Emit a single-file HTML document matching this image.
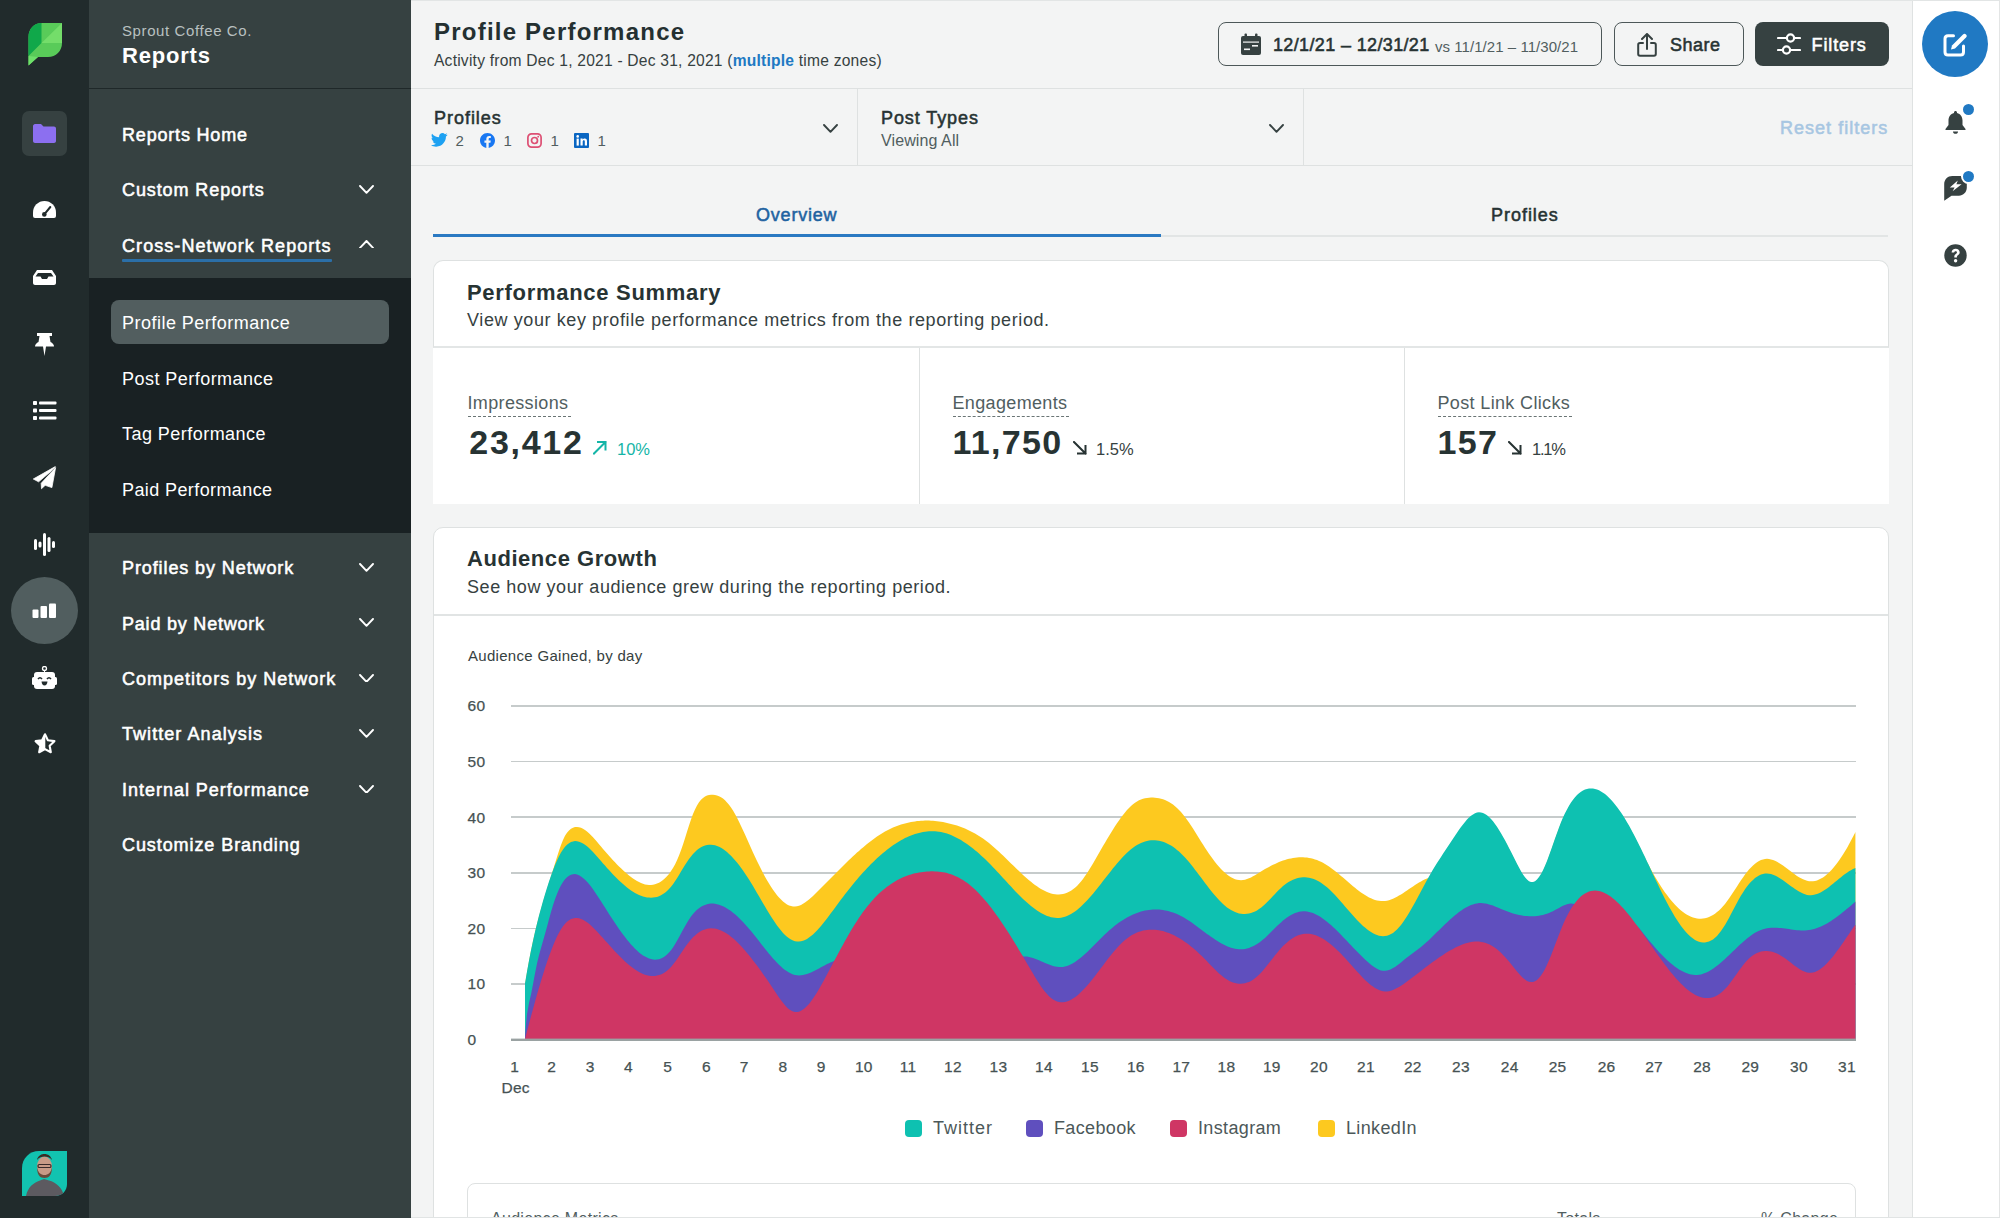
<!DOCTYPE html>
<html><head><meta charset="utf-8"><title>Profile Performance</title>
<style>
html,body{margin:0;padding:0;width:2000px;height:1218px;overflow:hidden;background:#f3f4f4;font-family:"Liberation Sans", sans-serif;}
.t{position:absolute;white-space:nowrap;line-height:1;font-family:"Liberation Sans", sans-serif;}
b{font-weight:700}
.ax{color:#465253;-webkit-text-stroke:0.25px #465253;letter-spacing:0.3px}
</style></head><body>
<div style="position:relative;width:2000px;height:1218px;overflow:hidden">
<div style="position:absolute;left:0px;top:0px;width:89px;height:1218px;background:#212b2c"></div>
<div style="position:absolute;left:89px;top:0px;width:322px;height:1218px;background:#364141"></div>
<div style="position:absolute;left:89px;top:88px;width:322px;height:1px;background:#1f2829"></div>
<div style="position:absolute;left:89px;top:278px;width:322px;height:255px;background:#192123"></div>
<div style="position:absolute;left:411px;top:0px;width:1501px;height:1218px;background:#f3f4f4"></div>
<div style="position:absolute;left:1912px;top:0px;width:88px;height:1218px;background:#fff;border-left:1px solid #dfe2e2;box-sizing:border-box"></div>
<div style="position:absolute;left:411px;top:0px;width:1589px;height:1px;background:#e2e5e5"></div>
<svg style="position:absolute;left:28px;top:23px" width="35" height="43" viewBox="0 0 35 43">
<path d="M14,0 H34 V20 C34,28 28,34 20,34 H10 L0.5,42.5 V14 C0.5,6 6,0 14,0 Z" fill="#59cb59"/>
<path d="M14,0 H13.5 V20 L0.5,33 V14 C0.5,6 6,0 13.5,0 Z" fill="#10a84a"/>
<path d="M34,0 V20 L13.5,20 Z" fill="#74dd6a"/>
<path d="M0.5,33 L10,34 L0.5,42.5 Z" fill="#6ee06a"/>
</svg>
<div style="position:absolute;left:22px;top:111px;width:45px;height:45px;background:#364141;border-radius:7px"></div>
<svg style="position:absolute;left:33px;top:124px" width="23" height="19" viewBox="0 0 23 19">
<path d="M0,2 C0,1 1,0 2,0 H8 L10.5,2.6 H21 C22,2.6 23,3.5 23,4.6 V17 C23,18 22,19 21,19 H2 C1,19 0,18 0,17 Z" fill="#8c6ff0"/></svg>
<svg style="position:absolute;left:33px;top:201px" width="23" height="17" viewBox="0 0 23 17">
<path d="M0,15 V11.5 A11.5,11.5 0 0 1 23,11.5 V15 Q23,17 21,17 H2 Q0,17 0,15 Z" fill="#fff"/>
<path d="M11.5,13.2 L17.3,6" stroke="#212b2c" stroke-width="2" stroke-linecap="round"/><circle cx="11.3" cy="13.4" r="2.3" fill="#212b2c"/></svg>
<svg style="position:absolute;left:33px;top:270px" width="23" height="15" viewBox="0 0 23 15">
<path d="M4,0 H19 L23,6 V13 C23,14 22,15 21,15 H2 C1,15 0,14 0,13 V6 Z" fill="#fff"/>
<path d="M5,3 H18 L20.5,6.5 H15.5 L14,9 H9 L7.5,6.5 H2.5 Z" fill="#212b2c"/></svg>
<svg style="position:absolute;left:35px;top:333px" width="19" height="23" viewBox="0 0 19 23">
<path d="M2,0 H17 V3 H14.5 L15.5,9 C17.5,10 19,11.5 19,13.5 H11 L9.5,23 L8,13.5 H0 C0,11.5 1.5,10 3.5,9 L4.5,3 H2 Z" fill="#fff"/></svg>
<svg style="position:absolute;left:33px;top:401px" width="24" height="19" viewBox="0 0 24 19">
<g fill="#fff"><rect x="0" y="0" width="4" height="4" rx="0.8"/><rect x="0" y="7.5" width="4" height="4" rx="0.8"/><rect x="0" y="15" width="4" height="4" rx="0.8"/>
<rect x="6" y="0.5" width="17.5" height="3" rx="1"/><rect x="6" y="8" width="17.5" height="3" rx="1"/><rect x="6" y="15.5" width="17.5" height="3" rx="1"/></g></svg>
<svg style="position:absolute;left:33px;top:466px" width="24" height="24" viewBox="0 0 24 24">
<path d="M22.3,0.6 L0.3,13 L5.6,15.8 L18,5.2 Z" fill="#fff" stroke="#fff" stroke-width="0.8" stroke-linejoin="round"/>
<path d="M22.6,1.5 L18.9,21.6 L12.2,19.3 L8.5,22.7 L8.2,17.3 L19.5,5 Z" fill="#fff" stroke="#fff" stroke-width="0.8" stroke-linejoin="round"/></svg>
<svg style="position:absolute;left:34px;top:533px" width="21" height="23" viewBox="0 0 21 23">
<g fill="#fff"><rect x="0" y="6" width="3" height="11" rx="1.5"/><rect x="4.5" y="8.5" width="3" height="6" rx="1.5"/><rect x="9" y="0" width="3" height="23" rx="1.5"/>
<rect x="13.5" y="4" width="3" height="15" rx="1.5"/><rect x="18" y="8" width="3" height="7" rx="1.5"/></g></svg>
<div style="position:absolute;left:11px;top:577px;width:67px;height:67px;background:#515e5f;border-radius:50%"></div>
<svg style="position:absolute;left:32px;top:603px" width="25" height="16" viewBox="0 0 25 16">
<g fill="#fff"><rect x="0.5" y="6.5" width="6" height="8.5" rx="1"/><rect x="8.5" y="3" width="6.5" height="12" rx="1"/><rect x="17" y="0.5" width="7" height="14.5" rx="1"/></g></svg>
<svg style="position:absolute;left:32px;top:666px" width="25" height="24" viewBox="0 0 25 24">
<circle cx="12.5" cy="2.5" r="2" fill="none" stroke="#fff" stroke-width="1.3"/><rect x="12" y="4" width="1" height="3" fill="#fff"/>
<rect x="2" y="6" width="21" height="17" rx="3" fill="#fff"/><rect x="0" y="11" width="25" height="8" rx="1.5" fill="#fff"/>
<path d="M6,13 Q8,10.5 10,13" stroke="#212b2c" stroke-width="1.6" fill="none"/><path d="M15,13 Q17,10.5 19,13" stroke="#212b2c" stroke-width="1.6" fill="none"/>
<path d="M9.5,15.5 H15.5 Q15,19.5 12.5,19.5 Q10,19.5 9.5,15.5 Z" fill="#212b2c"/></svg>
<svg style="position:absolute;left:32.5px;top:732px" width="24" height="24" viewBox="0 0 24 24">
<polygon points="12.00,2.30 14.88,8.24 21.42,9.14 16.66,13.71 17.82,20.21 12.00,17.10 6.18,20.21 7.34,13.71 2.58,9.14 9.12,8.24" fill="none" stroke="#fff" stroke-width="2.1" stroke-linejoin="round"/>
<polygon points="12.00,2.30 9.12,8.24 2.58,9.14 7.34,13.71 6.18,20.21 12.00,17.10" fill="#fff" stroke="#fff" stroke-width="0.6" stroke-linejoin="round"/></svg>
<svg style="position:absolute;left:22px;top:1151px" width="45" height="45" viewBox="0 0 45 45">
<defs><clipPath id="av"><path d="M17,0 H45 V33 C45,40 40,45 33,45 H0 V17 C0,7.5 7.5,0 17,0 Z"/></clipPath></defs>
<g clip-path="url(#av)"><rect width="45" height="45" fill="#12c3b0"/>
<path d="M4,45 C6,36 11,32 18,29.5 L22,28 L27,29.5 C34,31.5 40,36 42,45 Z" fill="#5c5a60"/>
<ellipse cx="22.5" cy="15.5" rx="7.5" ry="10" fill="#c99a86"/><path d="M15,16 C15,24 18,27 22.5,27 C27,27 30,24 30,16 C29,22 26,24 22.5,24 C19,24 16,22 15,16Z" fill="#6b4a3a"/>
<path d="M15,9 C16,4 20,3 22.5,3 C26,3 29,5 30,9 C28,6 25,5.5 22.5,5.5 C20,5.5 17,6 15,9Z" fill="#3a2a22"/>
<rect x="16" y="13.5" width="13" height="3" rx="1.3" fill="none" stroke="#3a2a2a" stroke-width="1.2"/></g></svg>
<div class="t" style="left:122.0px;top:23.2px;font-size:15px;color:#b9c0c0;font-weight:400;letter-spacing:0.6px;">Sprout Coffee Co.</div>
<div class="t" style="left:122.0px;top:45.3px;font-size:22px;color:#ffffff;font-weight:700;letter-spacing:0.8px;">Reports</div>
<div class="t" style="left:122.0px;top:125.7px;font-size:18px;color:#fff;font-weight:400;letter-spacing:0.81px;-webkit-text-stroke:0.54px #fff;">Reports Home</div>
<div class="t" style="left:122.0px;top:181.2px;font-size:18px;color:#fff;font-weight:400;letter-spacing:0.9px;-webkit-text-stroke:0.54px #fff;">Custom Reports</div>
<svg style="position:absolute;left:359px;top:185px" width="15" height="8.8" viewBox="0 0 15 8.8"><path d="M1,1 L7.5,7.8 L14,1" fill="none" stroke="#fff" stroke-width="1.9" stroke-linecap="round" stroke-linejoin="round"/></svg>
<div class="t" style="left:122.0px;top:236.7px;font-size:18px;color:#fff;font-weight:400;letter-spacing:1.07px;-webkit-text-stroke:0.54px #fff;">Cross-Network Reports</div>
<svg style="position:absolute;left:359px;top:239.5px" width="15" height="8.8" viewBox="0 0 15 8.8"><path d="M1,7.8 L7.5,1 L14,7.8" fill="none" stroke="#fff" stroke-width="1.9" stroke-linecap="round" stroke-linejoin="round"/></svg>
<div style="position:absolute;left:122px;top:258.5px;width:210px;height:3.3px;background:#2b6fa8;border-radius:1px"></div>
<div style="position:absolute;left:111px;top:300px;width:278px;height:44px;background:#525e5f;border-radius:8px"></div>
<div class="t" style="left:122.0px;top:314.2px;font-size:18px;color:#fff;font-weight:400;letter-spacing:0.48px;">Profile Performance</div>
<div class="t" style="left:122.0px;top:369.7px;font-size:18px;color:#fff;font-weight:400;letter-spacing:0.46px;">Post Performance</div>
<div class="t" style="left:122.0px;top:425.2px;font-size:18px;color:#fff;font-weight:400;letter-spacing:0.46px;">Tag Performance</div>
<div class="t" style="left:122.0px;top:480.7px;font-size:18px;color:#fff;font-weight:400;letter-spacing:0.4px;">Paid Performance</div>
<div class="t" style="left:122.0px;top:559.0px;font-size:18px;color:#fff;font-weight:400;letter-spacing:0.9px;-webkit-text-stroke:0.54px #fff;">Profiles by Network</div>
<svg style="position:absolute;left:359px;top:562.8px" width="15" height="8.8" viewBox="0 0 15 8.8"><path d="M1,1 L7.5,7.8 L14,1" fill="none" stroke="#fff" stroke-width="1.9" stroke-linecap="round" stroke-linejoin="round"/></svg>
<div class="t" style="left:122.0px;top:614.5px;font-size:18px;color:#fff;font-weight:400;letter-spacing:0.79px;-webkit-text-stroke:0.54px #fff;">Paid by Network</div>
<svg style="position:absolute;left:359px;top:618.25px" width="15" height="8.8" viewBox="0 0 15 8.8"><path d="M1,1 L7.5,7.8 L14,1" fill="none" stroke="#fff" stroke-width="1.9" stroke-linecap="round" stroke-linejoin="round"/></svg>
<div class="t" style="left:122.0px;top:669.9px;font-size:18px;color:#fff;font-weight:400;letter-spacing:1.01px;-webkit-text-stroke:0.54px #fff;">Competitors by Network</div>
<svg style="position:absolute;left:359px;top:673.6999999999999px" width="15" height="8.8" viewBox="0 0 15 8.8"><path d="M1,1 L7.5,7.8 L14,1" fill="none" stroke="#fff" stroke-width="1.9" stroke-linecap="round" stroke-linejoin="round"/></svg>
<div class="t" style="left:122.0px;top:725.4px;font-size:18px;color:#fff;font-weight:400;letter-spacing:1.06px;-webkit-text-stroke:0.54px #fff;">Twitter Analysis</div>
<svg style="position:absolute;left:359px;top:729.15px" width="15" height="8.8" viewBox="0 0 15 8.8"><path d="M1,1 L7.5,7.8 L14,1" fill="none" stroke="#fff" stroke-width="1.9" stroke-linecap="round" stroke-linejoin="round"/></svg>
<div class="t" style="left:122.0px;top:780.8px;font-size:18px;color:#fff;font-weight:400;letter-spacing:0.98px;-webkit-text-stroke:0.54px #fff;">Internal Performance</div>
<svg style="position:absolute;left:359px;top:784.5999999999999px" width="15" height="8.8" viewBox="0 0 15 8.8"><path d="M1,1 L7.5,7.8 L14,1" fill="none" stroke="#fff" stroke-width="1.9" stroke-linecap="round" stroke-linejoin="round"/></svg>
<div class="t" style="left:122.0px;top:836.2px;font-size:18px;color:#fff;font-weight:400;letter-spacing:0.92px;-webkit-text-stroke:0.54px #fff;">Customize Branding</div>
<div class="t" style="left:434.0px;top:19.9px;font-size:24px;color:#243031;font-weight:700;letter-spacing:1.22px;">Profile Performance</div>
<div class="t" style="left:434.0px;top:52.7px;font-size:15.6px;color:#364141;font-weight:400;letter-spacing:0.22px;">Activity from Dec 1, 2021 - Dec 31, 2021 (<b style="color:#2079c3">multiple</b> time zones)</div>
<div style="position:absolute;left:1218px;top:22px;width:384px;height:44px;border:1.8px solid #4d5859;border-radius:8px;box-sizing:border-box"></div>
<svg style="position:absolute;left:1241px;top:33px" width="20" height="22" viewBox="0 0 20 22">
<rect x="0" y="3" width="20" height="19" rx="2" fill="#364141"/><rect x="3.5" y="0.5" width="2.5" height="5" rx="1" fill="#364141"/><rect x="14" y="0.5" width="2.5" height="5" rx="1" fill="#364141"/>
<rect x="2" y="8.5" width="16" height="1.2" fill="#f3f4f4"/><rect x="11" y="12" width="6" height="1.6" fill="#f3f4f4"/><rect x="3" y="15.5" width="6" height="1.6" fill="#f3f4f4"/></svg>
<div class="t" style="left:1273.0px;top:36.0px;font-size:18px;color:#273333;font-weight:400;letter-spacing:0.36px;-webkit-text-stroke:0.54px #273333;">12/1/21 – 12/31/21</div>
<div class="t" style="left:1435.0px;top:38.5px;font-size:15px;color:#515e5f;font-weight:400;letter-spacing:0.05px;">vs 11/1/21 – 11/30/21</div>
<div style="position:absolute;left:1614px;top:22px;width:130px;height:44px;border:1.8px solid #4d5859;border-radius:8px;box-sizing:border-box"></div>
<svg style="position:absolute;left:1637px;top:33px" width="21" height="24" viewBox="0 0 21 24">
<path d="M6,10 H3 C2,10 1.2,10.8 1.2,11.8 V21 C1.2,22 2,22.8 3,22.8 H17 C18,22.8 18.8,22 18.8,21 V11.8 C18.8,10.8 18,10 17,10 H14" fill="none" stroke="#364141" stroke-width="2" stroke-linecap="round"/>
<path d="M10,16 V1.5 M5,6 L10,1 L15,6" fill="none" stroke="#364141" stroke-width="2" stroke-linecap="round" stroke-linejoin="round"/></svg>
<div class="t" style="left:1670.0px;top:35.7px;font-size:18px;color:#273333;font-weight:400;letter-spacing:0.5px;-webkit-text-stroke:0.54px #273333;">Share</div>
<div style="position:absolute;left:1755px;top:22px;width:134px;height:44px;background:#364141;border-radius:8px"></div>
<svg style="position:absolute;left:1777px;top:33px" width="24" height="23" viewBox="0 0 24 23">
<g fill="none" stroke="#fff" stroke-width="2.2" stroke-linecap="round"><path d="M1,5 H9.5 M17.5,5 H23"/><circle cx="13.5" cy="5" r="3.6"/>
<path d="M1,17 H5.5 M13.5,17 H23"/><circle cx="9.5" cy="17" r="3.6"/></g></svg>
<div class="t" style="left:1811.5px;top:35.7px;font-size:18px;color:#ffffff;font-weight:400;letter-spacing:0.88px;-webkit-text-stroke:0.54px #ffffff;">Filters</div>
<div style="position:absolute;left:411px;top:88px;width:1501px;height:1px;background:#dee1e1"></div>
<div class="t" style="left:434.0px;top:108.9px;font-size:18px;color:#273333;font-weight:400;letter-spacing:0.97px;-webkit-text-stroke:0.54px #273333;">Profiles</div>
<svg style="position:absolute;left:431px;top:133px" width="17" height="14" viewBox="0 0 24 20">
<path fill="#1da1f2" d="M23.6,2.4c-0.9,0.4-1.8,0.6-2.8,0.8c1-0.6,1.8-1.6,2.1-2.7c-0.9,0.6-2,1-3.1,1.2C18.9,0.6,17.6,0,16.3,0c-2.7,0-4.9,2.2-4.9,4.9c0,0.4,0,0.8,0.1,1.1C7.4,5.8,3.8,3.9,1.4,0.9C1,1.6,0.7,2.5,0.7,3.4c0,1.7,0.9,3.2,2.2,4.1c-0.8,0-1.6-0.2-2.2-0.6v0.1c0,2.4,1.7,4.4,3.9,4.8c-0.4,0.1-0.9,0.2-1.3,0.2c-0.3,0-0.6,0-0.9-0.1c0.6,2,2.4,3.4,4.6,3.4c-1.7,1.3-3.8,2.1-6.1,2.1c-0.4,0-0.8,0-1.2-0.1c2.2,1.4,4.8,2.2,7.5,2.2c9.1,0,14-7.5,14-14c0-0.2,0-0.4,0-0.6C22.2,4.2,23,3.3,23.6,2.4z"/></svg>
<div class="t" style="left:455.5px;top:133.2px;font-size:15px;color:#515e5f;font-weight:400;letter-spacing:0px;">2</div>
<svg style="position:absolute;left:480px;top:133px" width="15" height="15" viewBox="0 0 24 24">
<path fill="#1877f2" d="M24,12C24,5.4,18.6,0,12,0S0,5.4,0,12c0,6,4.4,11,10.1,11.9v-8.4H7.1V12h3V9.4c0-3,1.8-4.7,4.5-4.7c1.3,0,2.7,0.2,2.7,0.2v3h-1.5c-1.5,0-2,0.9-2,1.9V12h3.4l-0.5,3.5h-2.8v8.4C19.6,23,24,18,24,12z"/></svg>
<div class="t" style="left:503.5px;top:133.2px;font-size:15px;color:#515e5f;font-weight:400;letter-spacing:0px;">1</div>
<svg style="position:absolute;left:527px;top:133px" width="15" height="15" viewBox="0 0 15 15">
<rect x="0.9" y="0.9" width="13.2" height="13.2" rx="3.6" fill="none" stroke="#dd4f73" stroke-width="1.7"/><circle cx="7.5" cy="7.5" r="3" fill="none" stroke="#dd4f73" stroke-width="1.7"/><circle cx="11.2" cy="3.7" r="0.9" fill="#dd4f73"/></svg>
<div class="t" style="left:550.5px;top:133.2px;font-size:15px;color:#515e5f;font-weight:400;letter-spacing:0px;">1</div>
<svg style="position:absolute;left:574px;top:133px" width="15" height="15" viewBox="0 0 15 15">
<rect width="15" height="15" rx="1" fill="#0a66c2"/><rect x="2.6" y="5.6" width="2.2" height="7" fill="#fff"/><circle cx="3.7" cy="3.4" r="1.3" fill="#fff"/>
<path d="M6.5,5.6 H8.6 V6.6 C9,5.9 9.8,5.4 10.8,5.4 C12.5,5.4 13,6.5 13,8.3 V12.6 H10.8 V8.7 C10.8,7.9 10.6,7.3 9.8,7.3 C9,7.3 8.7,7.9 8.7,8.8 V12.6 H6.5 Z" fill="#fff"/></svg>
<div class="t" style="left:597.5px;top:133.2px;font-size:15px;color:#515e5f;font-weight:400;letter-spacing:0px;">1</div>
<svg style="position:absolute;left:823px;top:124px" width="15" height="8.8" viewBox="0 0 15 8.8"><path d="M1,1 L7.5,7.8 L14,1" fill="none" stroke="#364141" stroke-width="1.9" stroke-linecap="round" stroke-linejoin="round"/></svg>
<div style="position:absolute;left:857px;top:89px;width:1px;height:76px;background:#dee1e1"></div>
<div class="t" style="left:881.0px;top:108.9px;font-size:18px;color:#273333;font-weight:400;letter-spacing:0.91px;-webkit-text-stroke:0.54px #273333;">Post Types</div>
<div class="t" style="left:881.0px;top:132.9px;font-size:16px;color:#515e5f;font-weight:400;letter-spacing:0.1px;">Viewing All</div>
<svg style="position:absolute;left:1269px;top:124px" width="15" height="8.8" viewBox="0 0 15 8.8"><path d="M1,1 L7.5,7.8 L14,1" fill="none" stroke="#364141" stroke-width="1.9" stroke-linecap="round" stroke-linejoin="round"/></svg>
<div style="position:absolute;left:1303px;top:89px;width:1px;height:76px;background:#dee1e1"></div>
<div class="t" style="left:1780.0px;top:118.9px;font-size:18px;color:#a7c6e2;font-weight:400;letter-spacing:1.02px;-webkit-text-stroke:0.54px #a7c6e2;">Reset filters</div>
<div style="position:absolute;left:411px;top:165px;width:1501px;height:1px;background:#dee1e1"></div>
<div class="t" style="left:756.0px;top:205.7px;font-size:18px;color:#1f63a1;font-weight:400;letter-spacing:0.79px;-webkit-text-stroke:0.54px #1f63a1;">Overview</div>
<div class="t" style="left:1491.0px;top:205.7px;font-size:18px;color:#273333;font-weight:400;letter-spacing:0.97px;-webkit-text-stroke:0.54px #273333;">Profiles</div>
<div style="position:absolute;left:433px;top:235px;width:1455px;height:2px;background:#e2e5e5"></div>
<div style="position:absolute;left:433px;top:234px;width:728px;height:3.2px;background:#2a79c2"></div>
<div style="position:absolute;left:433px;top:260px;width:1456px;height:88px;background:#fff;border:1px solid #dee1e1;border-bottom:2px solid #e3e6e6;border-radius:10px 10px 0 0;box-sizing:border-box"></div>
<div style="position:absolute;left:433px;top:348px;width:1456px;height:156px;background:#fff"></div>
<div style="position:absolute;left:919px;top:348px;width:1px;height:156px;background:#dee1e1"></div>
<div style="position:absolute;left:1404px;top:348px;width:1px;height:156px;background:#dee1e1"></div>
<div class="t" style="left:467.0px;top:281.8px;font-size:22px;color:#273333;font-weight:700;letter-spacing:0.7px;">Performance Summary</div>
<div class="t" style="left:467.0px;top:311.2px;font-size:18px;color:#364141;font-weight:400;letter-spacing:0.6px;">View your key profile performance metrics from the reporting period.</div>
<div class="t" style="left:467.5px;top:394.0px;font-size:18px;color:#515e5f;font-weight:400;letter-spacing:0.35px;">Impressions</div>
<div style="position:absolute;left:467.5px;top:416px;width:103px;height:0px;border-top:1.5px dashed #6a7575"></div>
<div class="t" style="left:469.3px;top:424.6px;font-size:34px;color:#273333;font-weight:700;letter-spacing:1.7px;">23,412</div>
<div class="t" style="left:952.5px;top:394.0px;font-size:18px;color:#515e5f;font-weight:400;letter-spacing:0.35px;">Engagements</div>
<div style="position:absolute;left:952.5px;top:416px;width:116px;height:0px;border-top:1.5px dashed #6a7575"></div>
<div class="t" style="left:952.5px;top:424.6px;font-size:34px;color:#273333;font-weight:700;letter-spacing:1.3px;">11,750</div>
<div class="t" style="left:1437.5px;top:394.0px;font-size:18px;color:#515e5f;font-weight:400;letter-spacing:0.35px;">Post Link Clicks</div>
<div style="position:absolute;left:1437.5px;top:416px;width:134px;height:0px;border-top:1.5px dashed #6a7575"></div>
<div class="t" style="left:1437.5px;top:424.6px;font-size:34px;color:#273333;font-weight:700;letter-spacing:1.3px;">157</div>
<svg style="position:absolute;left:593px;top:441px" width="14" height="14" viewBox="0 0 14 14"><path d="M1,12.5 L12.5,1 M5,1 H12.5 V8.5" fill="none" stroke="#14b5a7" stroke-width="2" stroke-linecap="square"/></svg>
<div class="t" style="left:617.0px;top:440.5px;font-size:16.5px;color:#14b5a7;font-weight:400;letter-spacing:0px;">10%</div>
<svg style="position:absolute;left:1073px;top:441px" width="14" height="14" viewBox="0 0 14 14"><path d="M1,1 L12.5,12.5 M12.5,5 V12.5 H5" fill="none" stroke="#273333" stroke-width="2" stroke-linecap="square"/></svg>
<div class="t" style="left:1096.0px;top:440.5px;font-size:16.5px;color:#364141;font-weight:400;letter-spacing:0px;">1.5%</div>
<svg style="position:absolute;left:1508px;top:441px" width="14" height="14" viewBox="0 0 14 14"><path d="M1,1 L12.5,12.5 M12.5,5 V12.5 H5" fill="none" stroke="#273333" stroke-width="2" stroke-linecap="square"/></svg>
<div class="t" style="left:1532.0px;top:440.5px;font-size:16.5px;color:#364141;font-weight:400;letter-spacing:-1.2px;">1.1%</div>
<div style="position:absolute;left:433px;top:527px;width:1456px;height:720px;background:#fff;border:1px solid #dee1e1;border-radius:10px 10px 0 0;box-sizing:border-box"></div>
<div style="position:absolute;left:434px;top:614px;width:1454px;height:1.5px;background:#e1e4e4"></div>
<div class="t" style="left:467.0px;top:548.3px;font-size:22px;color:#273333;font-weight:700;letter-spacing:0.55px;">Audience Growth</div>
<div class="t" style="left:467.0px;top:578.2px;font-size:18px;color:#364141;font-weight:400;letter-spacing:0.56px;">See how your audience grew during the reporting period.</div>
<div class="t" style="left:468.0px;top:648.2px;font-size:15px;color:#364141;font-weight:400;letter-spacing:0.3px;">Audience Gained, by day</div>
<div style="position:absolute;left:511px;top:705.25px;width:1345px;height:1.5px;background:#c6cbcb"></div>
<div class="t" style="left:467.5px;top:698.3px;font-size:15.5px;color:#465253;font-weight:400;letter-spacing:0.3px;-webkit-text-stroke:0.25px #465253">60</div>
<div style="position:absolute;left:511px;top:760.85px;width:1345px;height:1.5px;background:#c6cbcb"></div>
<div class="t" style="left:467.5px;top:753.9px;font-size:15.5px;color:#465253;font-weight:400;letter-spacing:0.3px;-webkit-text-stroke:0.25px #465253">50</div>
<div style="position:absolute;left:511px;top:816.45px;width:1345px;height:1.5px;background:#c6cbcb"></div>
<div class="t" style="left:467.5px;top:809.5px;font-size:15.5px;color:#465253;font-weight:400;letter-spacing:0.3px;-webkit-text-stroke:0.25px #465253">40</div>
<div style="position:absolute;left:511px;top:872.05px;width:1345px;height:1.5px;background:#c6cbcb"></div>
<div class="t" style="left:467.5px;top:865.1px;font-size:15.5px;color:#465253;font-weight:400;letter-spacing:0.3px;-webkit-text-stroke:0.25px #465253">30</div>
<div style="position:absolute;left:511px;top:927.65px;width:1345px;height:1.5px;background:#c6cbcb"></div>
<div class="t" style="left:467.5px;top:920.7px;font-size:15.5px;color:#465253;font-weight:400;letter-spacing:0.3px;-webkit-text-stroke:0.25px #465253">20</div>
<div style="position:absolute;left:511px;top:983.25px;width:1345px;height:1.5px;background:#c6cbcb"></div>
<div class="t" style="left:467.5px;top:976.3px;font-size:15.5px;color:#465253;font-weight:400;letter-spacing:0.3px;-webkit-text-stroke:0.25px #465253">10</div>
<div style="position:absolute;left:511px;top:1038.85px;width:1345px;height:1.5px;background:#c6cbcb"></div>
<div class="t" style="left:467.5px;top:1031.9px;font-size:15.5px;color:#465253;font-weight:400;letter-spacing:0.3px;-webkit-text-stroke:0.25px #465253">0</div>
<svg style="position:absolute;left:0;top:0" width="2000" height="1218" viewBox="0 0 2000 1218"><path d="M525.0,984.7 L527.0,972.4 L529.0,961.2 L531.0,950.8 L533.0,941.2 L535.0,932.4 L537.0,924.1 L539.0,916.4 L541.0,909.2 L543.0,902.3 L545.0,895.6 L547.0,889.2 L549.0,882.8 L551.0,876.4 L553.0,870.0 L555.0,863.5 L557.0,857.0 L559.0,850.7 L561.0,844.9 L563.0,839.9 L565.0,835.8 L567.0,832.7 L569.0,830.4 L571.0,828.8 L573.0,827.7 L575.0,827.1 L577.0,826.9 L579.0,827.2 L581.0,827.8 L583.0,828.7 L585.0,830.0 L587.0,831.5 L589.0,833.2 L591.0,835.2 L593.0,837.3 L595.0,839.5 L597.0,841.8 L599.0,844.2 L601.0,846.5 L603.0,848.9 L605.0,851.3 L607.0,853.6 L609.0,855.8 L611.0,858.0 L613.0,860.2 L615.0,862.3 L617.0,864.4 L619.0,866.4 L621.0,868.3 L623.0,870.2 L625.0,872.0 L627.0,873.8 L629.0,875.5 L631.0,877.0 L633.0,878.5 L635.0,879.8 L637.0,881.0 L639.0,882.1 L641.0,883.0 L643.0,883.8 L645.0,884.4 L647.0,884.8 L649.0,885.0 L651.0,885.0 L653.0,884.8 L655.0,884.3 L657.0,883.6 L659.0,882.7 L661.0,881.5 L663.0,880.0 L665.0,878.3 L667.0,876.2 L669.0,873.9 L671.0,871.1 L673.0,868.0 L675.0,864.4 L677.0,860.3 L679.0,855.6 L681.0,850.3 L683.0,844.4 L685.0,838.2 L687.0,831.8 L689.0,825.5 L691.0,819.5 L693.0,814.1 L695.0,809.4 L697.0,805.5 L699.0,802.3 L701.0,799.8 L703.0,797.9 L705.0,796.5 L707.0,795.5 L709.0,794.9 L711.0,794.7 L713.0,794.7 L715.0,795.0 L717.0,795.5 L719.0,796.2 L721.0,797.3 L723.0,798.6 L725.0,800.3 L727.0,802.4 L729.0,804.7 L731.0,807.5 L733.0,810.6 L735.0,814.1 L737.0,817.8 L739.0,821.7 L741.0,825.9 L743.0,830.2 L745.0,834.6 L747.0,839.1 L749.0,843.6 L751.0,848.1 L753.0,852.5 L755.0,856.8 L757.0,861.0 L759.0,865.1 L761.0,869.1 L763.0,873.0 L765.0,876.7 L767.0,880.3 L769.0,883.6 L771.0,886.8 L773.0,889.8 L775.0,892.6 L777.0,895.2 L779.0,897.5 L781.0,899.6 L783.0,901.5 L785.0,903.1 L787.0,904.4 L789.0,905.4 L791.0,906.1 L793.0,906.5 L795.0,906.5 L797.0,906.3 L799.0,905.7 L801.0,904.9 L803.0,903.8 L805.0,902.6 L807.0,901.1 L809.0,899.5 L811.0,897.8 L813.0,895.9 L815.0,894.0 L817.0,892.1 L819.0,890.1 L821.0,888.1 L823.0,886.1 L825.0,884.1 L827.0,882.1 L829.0,880.0 L831.0,878.0 L833.0,876.0 L835.0,874.0 L837.0,872.0 L839.0,870.0 L841.0,868.0 L843.0,866.0 L845.0,864.0 L847.0,862.1 L849.0,860.1 L851.0,858.2 L853.0,856.3 L855.0,854.5 L857.0,852.6 L859.0,850.9 L861.0,849.1 L863.0,847.4 L865.0,845.7 L867.0,844.0 L869.0,842.5 L871.0,840.9 L873.0,839.4 L875.0,838.0 L877.0,836.6 L879.0,835.2 L881.0,834.0 L883.0,832.7 L885.0,831.6 L887.0,830.5 L889.0,829.5 L891.0,828.5 L893.0,827.6 L895.0,826.7 L897.0,826.0 L899.0,825.2 L901.0,824.6 L903.0,823.9 L905.0,823.4 L907.0,822.9 L909.0,822.4 L911.0,822.0 L913.0,821.7 L915.0,821.4 L917.0,821.1 L919.0,820.9 L921.0,820.8 L923.0,820.7 L925.0,820.6 L927.0,820.6 L929.0,820.6 L931.0,820.7 L933.0,820.8 L935.0,821.0 L937.0,821.2 L939.0,821.5 L941.0,821.8 L943.0,822.1 L945.0,822.5 L947.0,822.9 L949.0,823.4 L951.0,823.9 L953.0,824.4 L955.0,825.0 L957.0,825.6 L959.0,826.3 L961.0,827.0 L963.0,827.8 L965.0,828.6 L967.0,829.5 L969.0,830.4 L971.0,831.4 L973.0,832.5 L975.0,833.6 L977.0,834.8 L979.0,836.0 L981.0,837.3 L983.0,838.6 L985.0,840.1 L987.0,841.6 L989.0,843.1 L991.0,844.7 L993.0,846.4 L995.0,848.2 L997.0,850.0 L999.0,851.8 L1001.0,853.7 L1003.0,855.6 L1005.0,857.5 L1007.0,859.5 L1009.0,861.4 L1011.0,863.4 L1013.0,865.3 L1015.0,867.3 L1017.0,869.2 L1019.0,871.1 L1021.0,873.0 L1023.0,874.9 L1025.0,876.7 L1027.0,878.4 L1029.0,880.2 L1031.0,881.8 L1033.0,883.4 L1035.0,884.9 L1037.0,886.3 L1039.0,887.7 L1041.0,888.9 L1043.0,890.1 L1045.0,891.1 L1047.0,892.0 L1049.0,892.8 L1051.0,893.4 L1053.0,893.9 L1055.0,894.3 L1057.0,894.4 L1059.0,894.5 L1061.0,894.3 L1063.0,894.0 L1065.0,893.5 L1067.0,892.7 L1069.0,891.8 L1071.0,890.7 L1073.0,889.3 L1075.0,887.7 L1077.0,885.9 L1079.0,883.8 L1081.0,881.5 L1083.0,878.9 L1085.0,876.1 L1087.0,873.2 L1089.0,870.0 L1091.0,866.8 L1093.0,863.4 L1095.0,860.0 L1097.0,856.6 L1099.0,853.1 L1101.0,849.6 L1103.0,846.1 L1105.0,842.7 L1107.0,839.3 L1109.0,836.0 L1111.0,832.7 L1113.0,829.5 L1115.0,826.3 L1117.0,823.3 L1119.0,820.4 L1121.0,817.6 L1123.0,815.0 L1125.0,812.5 L1127.0,810.1 L1129.0,808.0 L1131.0,806.0 L1133.0,804.3 L1135.0,802.7 L1137.0,801.4 L1139.0,800.3 L1141.0,799.4 L1143.0,798.7 L1145.0,798.2 L1147.0,797.9 L1149.0,797.7 L1151.0,797.6 L1153.0,797.6 L1155.0,797.7 L1157.0,797.9 L1159.0,798.3 L1161.0,798.7 L1163.0,799.3 L1165.0,800.1 L1167.0,801.0 L1169.0,802.0 L1171.0,803.2 L1173.0,804.6 L1175.0,806.2 L1177.0,807.9 L1179.0,809.9 L1181.0,812.0 L1183.0,814.4 L1185.0,816.9 L1187.0,819.7 L1189.0,822.5 L1191.0,825.5 L1193.0,828.6 L1195.0,831.8 L1197.0,835.0 L1199.0,838.2 L1201.0,841.4 L1203.0,844.6 L1205.0,847.7 L1207.0,850.7 L1209.0,853.7 L1211.0,856.5 L1213.0,859.2 L1215.0,861.9 L1217.0,864.4 L1219.0,866.7 L1221.0,868.9 L1223.0,870.9 L1225.0,872.8 L1227.0,874.5 L1229.0,876.0 L1231.0,877.3 L1233.0,878.3 L1235.0,879.2 L1237.0,879.8 L1239.0,880.1 L1241.0,880.2 L1243.0,880.1 L1245.0,879.7 L1247.0,879.1 L1249.0,878.3 L1251.0,877.4 L1253.0,876.3 L1255.0,875.2 L1257.0,874.0 L1259.0,872.8 L1261.0,871.5 L1263.0,870.3 L1265.0,869.1 L1267.0,868.0 L1269.0,866.9 L1271.0,865.8 L1273.0,864.8 L1275.0,863.9 L1277.0,863.0 L1279.0,862.1 L1281.0,861.3 L1283.0,860.6 L1285.0,859.9 L1287.0,859.3 L1289.0,858.8 L1291.0,858.4 L1293.0,858.0 L1295.0,857.7 L1297.0,857.4 L1299.0,857.3 L1301.0,857.2 L1303.0,857.3 L1305.0,857.4 L1307.0,857.6 L1309.0,857.9 L1311.0,858.3 L1313.0,858.8 L1315.0,859.4 L1317.0,860.1 L1319.0,860.9 L1321.0,861.8 L1323.0,862.8 L1325.0,863.9 L1327.0,865.2 L1329.0,866.5 L1331.0,867.9 L1333.0,869.4 L1335.0,871.0 L1337.0,872.6 L1339.0,874.2 L1341.0,875.9 L1343.0,877.6 L1345.0,879.3 L1347.0,881.1 L1349.0,882.8 L1351.0,884.5 L1353.0,886.2 L1355.0,887.8 L1357.0,889.4 L1359.0,890.9 L1361.0,892.4 L1363.0,893.8 L1365.0,895.1 L1367.0,896.3 L1369.0,897.4 L1371.0,898.3 L1373.0,899.2 L1375.0,899.9 L1377.0,900.4 L1379.0,900.8 L1381.0,901.1 L1383.0,901.1 L1385.0,901.0 L1387.0,900.7 L1389.0,900.2 L1391.0,899.5 L1393.0,898.7 L1395.0,897.8 L1397.0,896.8 L1399.0,895.6 L1401.0,894.4 L1403.0,893.2 L1405.0,891.8 L1407.0,890.5 L1409.0,889.1 L1411.0,887.7 L1413.0,886.4 L1415.0,885.0 L1417.0,883.8 L1419.0,882.5 L1421.0,881.4 L1423.0,880.3 L1425.0,879.3 L1427.0,878.5 L1429.0,877.8 L1431.0,874.0 L1433.0,870.6 L1435.0,867.3 L1437.0,864.1 L1439.0,861.0 L1441.0,857.9 L1443.0,854.8 L1445.0,851.8 L1447.0,848.8 L1449.0,845.8 L1451.0,842.7 L1453.0,839.7 L1455.0,836.7 L1457.0,833.7 L1459.0,830.8 L1461.0,828.0 L1463.0,825.4 L1465.0,822.9 L1467.0,820.6 L1469.0,818.6 L1471.0,816.8 L1473.0,815.4 L1475.0,814.3 L1477.0,813.6 L1479.0,813.3 L1481.0,813.4 L1483.0,814.0 L1485.0,814.9 L1487.0,816.3 L1489.0,818.0 L1491.0,820.0 L1493.0,822.3 L1495.0,824.9 L1497.0,827.8 L1499.0,830.9 L1501.0,834.2 L1503.0,837.7 L1505.0,841.3 L1507.0,845.0 L1509.0,848.9 L1511.0,852.8 L1513.0,856.8 L1515.0,860.8 L1517.0,864.8 L1519.0,868.6 L1521.0,872.2 L1523.0,875.5 L1525.0,878.3 L1527.0,880.6 L1529.0,882.2 L1531.0,883.0 L1533.0,883.0 L1535.0,882.2 L1537.0,880.5 L1539.0,878.1 L1541.0,875.0 L1543.0,871.2 L1545.0,866.8 L1547.0,861.9 L1549.0,856.6 L1551.0,851.0 L1553.0,845.3 L1555.0,839.5 L1557.0,833.9 L1559.0,828.4 L1561.0,823.3 L1563.0,818.6 L1565.0,814.3 L1567.0,810.4 L1569.0,806.8 L1571.0,803.6 L1573.0,800.8 L1575.0,798.3 L1577.0,796.1 L1579.0,794.3 L1581.0,792.8 L1583.0,791.5 L1585.0,790.6 L1587.0,789.9 L1589.0,789.5 L1591.0,789.4 L1593.0,789.5 L1595.0,789.9 L1597.0,790.5 L1599.0,791.3 L1601.0,792.4 L1603.0,793.7 L1605.0,795.1 L1607.0,796.8 L1609.0,798.7 L1611.0,800.7 L1613.0,803.0 L1615.0,805.4 L1617.0,807.9 L1619.0,810.7 L1621.0,813.6 L1623.0,816.6 L1625.0,819.8 L1627.0,823.2 L1629.0,826.6 L1631.0,830.2 L1633.0,833.9 L1635.0,837.8 L1637.0,841.7 L1639.0,845.7 L1641.0,849.8 L1643.0,854.0 L1645.0,858.0 L1647.0,862.0 L1649.0,865.8 L1651.0,869.5 L1653.0,873.2 L1655.0,876.7 L1657.0,880.0 L1659.0,883.3 L1661.0,886.5 L1663.0,889.5 L1665.0,892.4 L1667.0,895.1 L1669.0,897.7 L1671.0,900.2 L1673.0,902.5 L1675.0,904.7 L1677.0,906.8 L1679.0,908.7 L1681.0,910.4 L1683.0,912.0 L1685.0,913.4 L1687.0,914.7 L1689.0,915.8 L1691.0,916.7 L1693.0,917.5 L1695.0,918.0 L1697.0,918.5 L1699.0,918.7 L1701.0,918.7 L1703.0,918.6 L1705.0,918.3 L1707.0,917.7 L1709.0,917.0 L1711.0,916.1 L1713.0,915.0 L1715.0,913.7 L1717.0,912.1 L1719.0,910.4 L1721.0,908.5 L1723.0,906.3 L1725.0,903.9 L1727.0,901.3 L1729.0,898.5 L1731.0,895.6 L1733.0,892.6 L1735.0,889.5 L1737.0,886.4 L1739.0,883.3 L1741.0,880.3 L1743.0,877.4 L1745.0,874.6 L1747.0,872.0 L1749.0,869.6 L1751.0,867.4 L1753.0,865.5 L1755.0,863.8 L1757.0,862.3 L1759.0,861.1 L1761.0,860.1 L1763.0,859.4 L1765.0,859.0 L1767.0,858.8 L1769.0,859.0 L1771.0,859.4 L1773.0,860.0 L1775.0,860.8 L1777.0,861.8 L1779.0,862.9 L1781.0,864.2 L1783.0,865.6 L1785.0,867.0 L1787.0,868.5 L1789.0,870.0 L1791.0,871.6 L1793.0,873.1 L1795.0,874.5 L1797.0,875.9 L1799.0,877.2 L1801.0,878.3 L1803.0,879.3 L1805.0,880.1 L1807.0,880.8 L1809.0,881.2 L1811.0,881.3 L1813.0,881.2 L1815.0,880.9 L1817.0,880.4 L1819.0,879.6 L1821.0,878.6 L1823.0,877.4 L1825.0,875.9 L1827.0,874.3 L1829.0,872.5 L1831.0,870.5 L1833.0,868.2 L1835.0,865.8 L1837.0,863.3 L1839.0,860.5 L1841.0,857.6 L1843.0,854.5 L1845.0,851.3 L1847.0,847.9 L1849.0,844.3 L1851.0,840.6 L1853.0,836.8 L1855.0,832.9 L1855.4,832.1 L1855.4,1039 L525.0,1039 Z" fill="#fdc91f"/><path d="M525.0,983.3 L527.0,971.5 L529.0,960.5 L531.0,950.3 L533.0,940.7 L535.0,931.8 L537.0,923.5 L539.0,915.6 L541.0,908.2 L543.0,901.1 L545.0,894.3 L547.0,887.8 L549.0,881.6 L551.0,875.7 L553.0,870.2 L555.0,865.1 L557.0,860.5 L559.0,856.3 L561.0,852.6 L563.0,849.4 L565.0,846.8 L567.0,844.8 L569.0,843.2 L571.0,842.1 L573.0,841.4 L575.0,841.1 L577.0,841.2 L579.0,841.7 L581.0,842.4 L583.0,843.5 L585.0,844.8 L587.0,846.3 L589.0,848.1 L591.0,850.0 L593.0,852.0 L595.0,854.2 L597.0,856.4 L599.0,858.7 L601.0,861.0 L603.0,863.4 L605.0,865.6 L607.0,867.9 L609.0,870.1 L611.0,872.3 L613.0,874.4 L615.0,876.5 L617.0,878.5 L619.0,880.5 L621.0,882.3 L623.0,884.1 L625.0,885.8 L627.0,887.5 L629.0,889.0 L631.0,890.4 L633.0,891.7 L635.0,892.9 L637.0,894.0 L639.0,895.0 L641.0,895.8 L643.0,896.5 L645.0,897.0 L647.0,897.4 L649.0,897.6 L651.0,897.7 L653.0,897.6 L655.0,897.3 L657.0,896.9 L659.0,896.2 L661.0,895.3 L663.0,894.1 L665.0,892.7 L667.0,891.1 L669.0,889.1 L671.0,886.8 L673.0,884.2 L675.0,881.3 L677.0,878.2 L679.0,874.9 L681.0,871.6 L683.0,868.3 L685.0,865.0 L687.0,861.9 L689.0,859.0 L691.0,856.4 L693.0,854.0 L695.0,851.9 L697.0,850.1 L699.0,848.6 L701.0,847.3 L703.0,846.3 L705.0,845.5 L707.0,845.0 L709.0,844.7 L711.0,844.7 L713.0,844.9 L715.0,845.3 L717.0,845.9 L719.0,846.8 L721.0,847.8 L723.0,849.1 L725.0,850.5 L727.0,852.1 L729.0,853.9 L731.0,855.8 L733.0,857.9 L735.0,860.2 L737.0,862.6 L739.0,865.1 L741.0,867.8 L743.0,870.6 L745.0,873.5 L747.0,876.5 L749.0,879.6 L751.0,882.8 L753.0,886.1 L755.0,889.5 L757.0,892.9 L759.0,896.3 L761.0,899.8 L763.0,903.2 L765.0,906.6 L767.0,910.0 L769.0,913.3 L771.0,916.5 L773.0,919.6 L775.0,922.6 L777.0,925.5 L779.0,928.1 L781.0,930.6 L783.0,932.9 L785.0,935.0 L787.0,936.8 L789.0,938.3 L791.0,939.6 L793.0,940.6 L795.0,941.2 L797.0,941.6 L799.0,941.6 L801.0,941.3 L803.0,940.8 L805.0,939.9 L807.0,938.9 L809.0,937.6 L811.0,936.1 L813.0,934.4 L815.0,932.5 L817.0,930.5 L819.0,928.3 L821.0,926.0 L823.0,923.6 L825.0,921.1 L827.0,918.5 L829.0,915.8 L831.0,913.1 L833.0,910.4 L835.0,907.7 L837.0,904.9 L839.0,902.2 L841.0,899.5 L843.0,896.9 L845.0,894.3 L847.0,891.7 L849.0,889.2 L851.0,886.7 L853.0,884.2 L855.0,881.8 L857.0,879.4 L859.0,877.1 L861.0,874.8 L863.0,872.6 L865.0,870.4 L867.0,868.3 L869.0,866.2 L871.0,864.1 L873.0,862.2 L875.0,860.2 L877.0,858.3 L879.0,856.5 L881.0,854.7 L883.0,853.0 L885.0,851.4 L887.0,849.8 L889.0,848.2 L891.0,846.7 L893.0,845.3 L895.0,844.0 L897.0,842.7 L899.0,841.4 L901.0,840.3 L903.0,839.2 L905.0,838.1 L907.0,837.2 L909.0,836.3 L911.0,835.4 L913.0,834.7 L915.0,834.0 L917.0,833.4 L919.0,832.9 L921.0,832.4 L923.0,832.0 L925.0,831.7 L927.0,831.5 L929.0,831.3 L931.0,831.2 L933.0,831.2 L935.0,831.3 L937.0,831.5 L939.0,831.8 L941.0,832.1 L943.0,832.5 L945.0,833.0 L947.0,833.6 L949.0,834.3 L951.0,835.1 L953.0,835.9 L955.0,836.9 L957.0,837.9 L959.0,839.0 L961.0,840.1 L963.0,841.4 L965.0,842.7 L967.0,844.0 L969.0,845.5 L971.0,847.0 L973.0,848.5 L975.0,850.2 L977.0,851.8 L979.0,853.6 L981.0,855.4 L983.0,857.2 L985.0,859.1 L987.0,861.1 L989.0,863.1 L991.0,865.1 L993.0,867.2 L995.0,869.3 L997.0,871.4 L999.0,873.6 L1001.0,875.8 L1003.0,877.9 L1005.0,880.1 L1007.0,882.3 L1009.0,884.5 L1011.0,886.6 L1013.0,888.8 L1015.0,890.9 L1017.0,892.9 L1019.0,895.0 L1021.0,897.0 L1023.0,898.9 L1025.0,900.8 L1027.0,902.6 L1029.0,904.3 L1031.0,906.0 L1033.0,907.6 L1035.0,909.1 L1037.0,910.5 L1039.0,911.8 L1041.0,913.0 L1043.0,914.1 L1045.0,915.0 L1047.0,915.9 L1049.0,916.6 L1051.0,917.2 L1053.0,917.6 L1055.0,917.8 L1057.0,918.0 L1059.0,917.9 L1061.0,917.7 L1063.0,917.3 L1065.0,916.7 L1067.0,915.9 L1069.0,915.0 L1071.0,913.9 L1073.0,912.7 L1075.0,911.4 L1077.0,909.9 L1079.0,908.2 L1081.0,906.5 L1083.0,904.6 L1085.0,902.6 L1087.0,900.5 L1089.0,898.3 L1091.0,896.0 L1093.0,893.7 L1095.0,891.3 L1097.0,888.8 L1099.0,886.3 L1101.0,883.7 L1103.0,881.1 L1105.0,878.5 L1107.0,876.0 L1109.0,873.4 L1111.0,870.9 L1113.0,868.3 L1115.0,865.9 L1117.0,863.5 L1119.0,861.2 L1121.0,858.9 L1123.0,856.7 L1125.0,854.7 L1127.0,852.8 L1129.0,850.9 L1131.0,849.3 L1133.0,847.7 L1135.0,846.3 L1137.0,845.1 L1139.0,844.0 L1141.0,843.0 L1143.0,842.2 L1145.0,841.5 L1147.0,841.0 L1149.0,840.6 L1151.0,840.3 L1153.0,840.2 L1155.0,840.2 L1157.0,840.4 L1159.0,840.7 L1161.0,841.2 L1163.0,841.8 L1165.0,842.5 L1167.0,843.4 L1169.0,844.4 L1171.0,845.5 L1173.0,846.8 L1175.0,848.3 L1177.0,849.9 L1179.0,851.6 L1181.0,853.4 L1183.0,855.4 L1185.0,857.6 L1187.0,859.8 L1189.0,862.1 L1191.0,864.6 L1193.0,867.1 L1195.0,869.7 L1197.0,872.3 L1199.0,874.9 L1201.0,877.6 L1203.0,880.3 L1205.0,882.9 L1207.0,885.6 L1209.0,888.2 L1211.0,890.7 L1213.0,893.2 L1215.0,895.6 L1217.0,897.8 L1219.0,900.0 L1221.0,902.1 L1223.0,904.0 L1225.0,905.8 L1227.0,907.4 L1229.0,908.8 L1231.0,910.1 L1233.0,911.1 L1235.0,912.1 L1237.0,912.8 L1239.0,913.4 L1241.0,913.7 L1243.0,914.0 L1245.0,914.0 L1247.0,913.8 L1249.0,913.5 L1251.0,913.0 L1253.0,912.3 L1255.0,911.4 L1257.0,910.4 L1259.0,909.1 L1261.0,907.7 L1263.0,906.1 L1265.0,904.3 L1267.0,902.3 L1269.0,900.3 L1271.0,898.2 L1273.0,896.0 L1275.0,893.9 L1277.0,891.8 L1279.0,889.8 L1281.0,887.9 L1283.0,886.1 L1285.0,884.5 L1287.0,883.1 L1289.0,881.8 L1291.0,880.7 L1293.0,879.7 L1295.0,878.9 L1297.0,878.3 L1299.0,877.8 L1301.0,877.5 L1303.0,877.3 L1305.0,877.3 L1307.0,877.4 L1309.0,877.7 L1311.0,878.2 L1313.0,878.8 L1315.0,879.6 L1317.0,880.5 L1319.0,881.6 L1321.0,882.8 L1323.0,884.2 L1325.0,885.7 L1327.0,887.3 L1329.0,889.1 L1331.0,891.0 L1333.0,893.0 L1335.0,895.1 L1337.0,897.3 L1339.0,899.5 L1341.0,901.8 L1343.0,904.1 L1345.0,906.4 L1347.0,908.7 L1349.0,911.0 L1351.0,913.3 L1353.0,915.6 L1355.0,917.8 L1357.0,919.9 L1359.0,922.0 L1361.0,924.0 L1363.0,925.9 L1365.0,927.6 L1367.0,929.3 L1369.0,930.8 L1371.0,932.1 L1373.0,933.3 L1375.0,934.3 L1377.0,935.1 L1379.0,935.7 L1381.0,936.1 L1383.0,936.2 L1385.0,936.1 L1387.0,935.7 L1389.0,935.1 L1391.0,934.1 L1393.0,932.9 L1395.0,931.3 L1397.0,929.5 L1399.0,927.3 L1401.0,924.9 L1403.0,922.2 L1405.0,919.3 L1407.0,916.2 L1409.0,912.9 L1411.0,909.5 L1413.0,906.0 L1415.0,902.4 L1417.0,898.7 L1419.0,894.9 L1421.0,891.2 L1423.0,887.4 L1425.0,883.7 L1427.0,880.1 L1429.0,876.5 L1431.0,873.0 L1433.0,869.6 L1435.0,866.3 L1437.0,863.1 L1439.0,860.0 L1441.0,856.9 L1443.0,853.8 L1445.0,850.8 L1447.0,847.8 L1449.0,844.8 L1451.0,841.7 L1453.0,838.7 L1455.0,835.7 L1457.0,832.7 L1459.0,829.8 L1461.0,827.0 L1463.0,824.4 L1465.0,821.9 L1467.0,819.6 L1469.0,817.6 L1471.0,815.8 L1473.0,814.4 L1475.0,813.3 L1477.0,812.6 L1479.0,812.3 L1481.0,812.4 L1483.0,813.0 L1485.0,813.9 L1487.0,815.3 L1489.0,817.0 L1491.0,819.0 L1493.0,821.3 L1495.0,823.9 L1497.0,826.8 L1499.0,829.9 L1501.0,833.2 L1503.0,836.7 L1505.0,840.3 L1507.0,844.0 L1509.0,847.9 L1511.0,851.8 L1513.0,855.8 L1515.0,859.8 L1517.0,863.8 L1519.0,867.6 L1521.0,871.2 L1523.0,874.5 L1525.0,877.3 L1527.0,879.6 L1529.0,881.2 L1531.0,882.0 L1533.0,882.0 L1535.0,881.2 L1537.0,879.5 L1539.0,877.1 L1541.0,874.0 L1543.0,870.2 L1545.0,865.8 L1547.0,860.9 L1549.0,855.6 L1551.0,850.0 L1553.0,844.3 L1555.0,838.5 L1557.0,832.9 L1559.0,827.4 L1561.0,822.3 L1563.0,817.6 L1565.0,813.3 L1567.0,809.4 L1569.0,805.8 L1571.0,802.6 L1573.0,799.8 L1575.0,797.3 L1577.0,795.1 L1579.0,793.3 L1581.0,791.8 L1583.0,790.5 L1585.0,789.6 L1587.0,788.9 L1589.0,788.5 L1591.0,788.4 L1593.0,788.5 L1595.0,788.9 L1597.0,789.5 L1599.0,790.3 L1601.0,791.4 L1603.0,792.7 L1605.0,794.1 L1607.0,795.8 L1609.0,797.7 L1611.0,799.7 L1613.0,802.0 L1615.0,804.4 L1617.0,806.9 L1619.0,809.7 L1621.0,812.6 L1623.0,815.6 L1625.0,818.8 L1627.0,822.2 L1629.0,825.6 L1631.0,829.2 L1633.0,832.9 L1635.0,836.8 L1637.0,840.7 L1639.0,844.7 L1641.0,848.8 L1643.0,852.9 L1645.0,857.1 L1647.0,861.4 L1649.0,865.6 L1651.0,869.9 L1653.0,874.2 L1655.0,878.4 L1657.0,882.6 L1659.0,886.8 L1661.0,890.9 L1663.0,894.9 L1665.0,898.9 L1667.0,902.7 L1669.0,906.5 L1671.0,910.1 L1673.0,913.6 L1675.0,917.0 L1677.0,920.1 L1679.0,923.1 L1681.0,926.0 L1683.0,928.6 L1685.0,931.0 L1687.0,933.2 L1689.0,935.2 L1691.0,937.0 L1693.0,938.6 L1695.0,939.9 L1697.0,940.9 L1699.0,941.7 L1701.0,942.2 L1703.0,942.5 L1705.0,942.5 L1707.0,942.1 L1709.0,941.5 L1711.0,940.6 L1713.0,939.4 L1715.0,937.8 L1717.0,935.9 L1719.0,933.6 L1721.0,931.1 L1723.0,928.1 L1725.0,924.9 L1727.0,921.5 L1729.0,917.9 L1731.0,914.1 L1733.0,910.3 L1735.0,906.5 L1737.0,902.8 L1739.0,899.1 L1741.0,895.6 L1743.0,892.4 L1745.0,889.3 L1747.0,886.6 L1749.0,884.1 L1751.0,881.8 L1753.0,879.9 L1755.0,878.1 L1757.0,876.7 L1759.0,875.5 L1761.0,874.6 L1763.0,873.9 L1765.0,873.6 L1767.0,873.5 L1769.0,873.7 L1771.0,874.1 L1773.0,874.7 L1775.0,875.6 L1777.0,876.6 L1779.0,877.7 L1781.0,879.0 L1783.0,880.3 L1785.0,881.7 L1787.0,883.2 L1789.0,884.7 L1791.0,886.2 L1793.0,887.6 L1795.0,889.0 L1797.0,890.3 L1799.0,891.6 L1801.0,892.6 L1803.0,893.6 L1805.0,894.3 L1807.0,894.9 L1809.0,895.2 L1811.0,895.2 L1813.0,895.1 L1815.0,894.6 L1817.0,894.0 L1819.0,893.2 L1821.0,892.2 L1823.0,891.0 L1825.0,889.8 L1827.0,888.4 L1829.0,886.9 L1831.0,885.3 L1833.0,883.7 L1835.0,882.1 L1837.0,880.4 L1839.0,878.8 L1841.0,877.2 L1843.0,875.6 L1845.0,874.1 L1847.0,872.7 L1849.0,871.3 L1851.0,870.2 L1853.0,869.1 L1855.0,868.2 L1855.4,868.1 L1855.4,1039 L525.0,1039 Z" fill="#0ec1b1"/><path d="M525.0,1035.2 L527.0,1014.2 L529.0,1003.1 L531.0,994.6 L533.0,984.3 L535.0,973.4 L537.0,963.6 L539.0,955.3 L541.0,948.0 L543.0,941.0 L545.0,934.0 L547.0,926.7 L549.0,919.3 L551.0,912.1 L553.0,905.3 L555.0,899.2 L557.0,893.9 L559.0,889.2 L561.0,885.3 L563.0,882.0 L565.0,879.3 L567.0,877.2 L569.0,875.7 L571.0,874.7 L573.0,874.2 L575.0,874.1 L577.0,874.5 L579.0,875.3 L581.0,876.5 L583.0,877.9 L585.0,879.7 L587.0,881.8 L589.0,884.1 L591.0,886.6 L593.0,889.3 L595.0,892.2 L597.0,895.2 L599.0,898.2 L601.0,901.3 L603.0,904.5 L605.0,907.6 L607.0,910.7 L609.0,913.9 L611.0,916.9 L613.0,920.0 L615.0,923.0 L617.0,926.0 L619.0,928.9 L621.0,931.7 L623.0,934.5 L625.0,937.1 L627.0,939.7 L629.0,942.1 L631.0,944.4 L633.0,946.6 L635.0,948.7 L637.0,950.6 L639.0,952.4 L641.0,954.0 L643.0,955.4 L645.0,956.6 L647.0,957.6 L649.0,958.5 L651.0,959.1 L653.0,959.5 L655.0,959.7 L657.0,959.6 L659.0,959.2 L661.0,958.5 L663.0,957.6 L665.0,956.3 L667.0,954.6 L669.0,952.6 L671.0,950.2 L673.0,947.4 L675.0,944.2 L677.0,940.8 L679.0,937.2 L681.0,933.5 L683.0,929.8 L685.0,926.2 L687.0,922.7 L689.0,919.5 L691.0,916.6 L693.0,914.0 L695.0,911.8 L697.0,909.8 L699.0,908.2 L701.0,906.8 L703.0,905.7 L705.0,904.9 L707.0,904.2 L709.0,903.8 L711.0,903.6 L713.0,903.6 L715.0,903.8 L717.0,904.2 L719.0,904.7 L721.0,905.4 L723.0,906.3 L725.0,907.3 L727.0,908.4 L729.0,909.7 L731.0,911.1 L733.0,912.7 L735.0,914.3 L737.0,916.1 L739.0,918.0 L741.0,920.0 L743.0,922.1 L745.0,924.2 L747.0,926.5 L749.0,928.8 L751.0,931.1 L753.0,933.6 L755.0,936.1 L757.0,938.6 L759.0,941.1 L761.0,943.7 L763.0,946.2 L765.0,948.8 L767.0,951.3 L769.0,953.7 L771.0,956.1 L773.0,958.4 L775.0,960.6 L777.0,962.7 L779.0,964.8 L781.0,966.6 L783.0,968.4 L785.0,969.9 L787.0,971.3 L789.0,972.5 L791.0,973.6 L793.0,974.4 L795.0,974.9 L797.0,975.3 L799.0,975.4 L801.0,975.3 L803.0,975.0 L805.0,974.6 L807.0,974.0 L809.0,973.3 L811.0,972.4 L813.0,971.5 L815.0,970.5 L817.0,969.5 L819.0,968.4 L821.0,967.3 L823.0,966.2 L825.0,965.2 L827.0,964.1 L829.0,963.2 L831.0,962.3 L833.0,961.6 L835.0,960.5 L837.0,956.8 L839.0,953.0 L841.0,949.3 L843.0,945.7 L845.0,942.1 L847.0,938.5 L849.0,935.0 L851.0,931.6 L853.0,928.3 L855.0,925.0 L857.0,921.9 L859.0,918.8 L861.0,915.9 L863.0,913.1 L865.0,910.4 L867.0,907.8 L869.0,905.4 L871.0,903.0 L873.0,900.8 L875.0,898.6 L877.0,896.6 L879.0,894.6 L881.0,892.8 L883.0,891.0 L885.0,889.4 L887.0,887.8 L889.0,886.4 L891.0,885.0 L893.0,883.7 L895.0,882.4 L897.0,881.3 L899.0,880.2 L901.0,879.3 L903.0,878.3 L905.0,877.5 L907.0,876.7 L909.0,876.0 L911.0,875.4 L913.0,874.8 L915.0,874.3 L917.0,873.9 L919.0,873.5 L921.0,873.2 L923.0,872.9 L925.0,872.7 L927.0,872.5 L929.0,872.4 L931.0,872.3 L933.0,872.3 L935.0,872.4 L937.0,872.5 L939.0,872.7 L941.0,872.9 L943.0,873.3 L945.0,873.6 L947.0,874.1 L949.0,874.7 L951.0,875.3 L953.0,876.0 L955.0,876.9 L957.0,877.8 L959.0,878.8 L961.0,879.9 L963.0,881.1 L965.0,882.4 L967.0,883.8 L969.0,885.3 L971.0,887.0 L973.0,888.7 L975.0,890.6 L977.0,892.5 L979.0,894.5 L981.0,896.7 L983.0,898.9 L985.0,901.2 L987.0,903.6 L989.0,906.0 L991.0,908.6 L993.0,911.2 L995.0,913.9 L997.0,916.7 L999.0,919.5 L1001.0,922.4 L1003.0,925.4 L1005.0,928.4 L1007.0,931.5 L1009.0,934.6 L1011.0,937.8 L1013.0,941.0 L1015.0,944.3 L1017.0,947.6 L1019.0,950.9 L1021.0,954.2 L1023.0,956.4 L1025.0,956.4 L1027.0,956.6 L1029.0,956.9 L1031.0,957.4 L1033.0,958.0 L1035.0,958.7 L1037.0,959.5 L1039.0,960.3 L1041.0,961.2 L1043.0,962.0 L1045.0,962.9 L1047.0,963.7 L1049.0,964.5 L1051.0,965.2 L1053.0,965.9 L1055.0,966.4 L1057.0,966.8 L1059.0,967.0 L1061.0,967.0 L1063.0,966.9 L1065.0,966.5 L1067.0,965.9 L1069.0,965.2 L1071.0,964.3 L1073.0,963.2 L1075.0,962.0 L1077.0,960.6 L1079.0,959.1 L1081.0,957.5 L1083.0,955.8 L1085.0,954.0 L1087.0,952.2 L1089.0,950.3 L1091.0,948.3 L1093.0,946.3 L1095.0,944.3 L1097.0,942.3 L1099.0,940.3 L1101.0,938.2 L1103.0,936.3 L1105.0,934.3 L1107.0,932.4 L1109.0,930.6 L1111.0,928.9 L1113.0,927.2 L1115.0,925.6 L1117.0,924.1 L1119.0,922.6 L1121.0,921.2 L1123.0,919.9 L1125.0,918.7 L1127.0,917.5 L1129.0,916.5 L1131.0,915.5 L1133.0,914.5 L1135.0,913.7 L1137.0,912.9 L1139.0,912.2 L1141.0,911.6 L1143.0,911.1 L1145.0,910.6 L1147.0,910.2 L1149.0,909.9 L1151.0,909.7 L1153.0,909.6 L1155.0,909.5 L1157.0,909.5 L1159.0,909.6 L1161.0,909.8 L1163.0,910.0 L1165.0,910.4 L1167.0,910.8 L1169.0,911.3 L1171.0,911.9 L1173.0,912.5 L1175.0,913.3 L1177.0,914.1 L1179.0,915.0 L1181.0,916.0 L1183.0,917.1 L1185.0,918.3 L1187.0,919.5 L1189.0,920.8 L1191.0,922.1 L1193.0,923.5 L1195.0,925.0 L1197.0,926.4 L1199.0,927.9 L1201.0,929.4 L1203.0,930.9 L1205.0,932.4 L1207.0,933.9 L1209.0,935.3 L1211.0,936.7 L1213.0,938.1 L1215.0,939.5 L1217.0,940.8 L1219.0,942.0 L1221.0,943.2 L1223.0,944.3 L1225.0,945.3 L1227.0,946.2 L1229.0,947.0 L1231.0,947.7 L1233.0,948.3 L1235.0,948.8 L1237.0,949.1 L1239.0,949.3 L1241.0,949.3 L1243.0,949.2 L1245.0,948.9 L1247.0,948.4 L1249.0,947.9 L1251.0,947.1 L1253.0,946.2 L1255.0,945.2 L1257.0,944.0 L1259.0,942.7 L1261.0,941.2 L1263.0,939.6 L1265.0,937.9 L1267.0,936.0 L1269.0,934.1 L1271.0,932.1 L1273.0,930.1 L1275.0,928.1 L1277.0,926.1 L1279.0,924.2 L1281.0,922.4 L1283.0,920.6 L1285.0,919.0 L1287.0,917.5 L1289.0,916.2 L1291.0,915.0 L1293.0,914.0 L1295.0,913.1 L1297.0,912.4 L1299.0,911.8 L1301.0,911.5 L1303.0,911.3 L1305.0,911.3 L1307.0,911.5 L1309.0,911.9 L1311.0,912.4 L1313.0,913.1 L1315.0,914.0 L1317.0,915.0 L1319.0,916.1 L1321.0,917.3 L1323.0,918.7 L1325.0,920.2 L1327.0,921.7 L1329.0,923.4 L1331.0,925.1 L1333.0,926.9 L1335.0,928.8 L1337.0,930.8 L1339.0,932.8 L1341.0,934.8 L1343.0,936.9 L1345.0,938.9 L1347.0,941.1 L1349.0,943.2 L1351.0,945.3 L1353.0,947.4 L1355.0,949.5 L1357.0,951.6 L1359.0,953.6 L1361.0,955.6 L1363.0,957.6 L1365.0,959.5 L1367.0,961.3 L1369.0,963.1 L1371.0,964.7 L1373.0,966.3 L1375.0,967.6 L1377.0,968.8 L1379.0,969.7 L1381.0,970.4 L1383.0,970.8 L1385.0,970.8 L1387.0,970.6 L1389.0,970.0 L1391.0,969.2 L1393.0,968.1 L1395.0,966.9 L1397.0,965.5 L1399.0,964.0 L1401.0,962.4 L1403.0,960.7 L1405.0,959.1 L1407.0,957.5 L1409.0,955.9 L1411.0,954.4 L1413.0,953.0 L1415.0,951.5 L1417.0,950.0 L1419.0,948.5 L1421.0,946.9 L1423.0,945.3 L1425.0,943.5 L1427.0,941.7 L1429.0,939.9 L1431.0,938.0 L1433.0,936.0 L1435.0,934.1 L1437.0,932.1 L1439.0,930.2 L1441.0,928.2 L1443.0,926.2 L1445.0,924.3 L1447.0,922.4 L1449.0,920.6 L1451.0,918.7 L1453.0,917.0 L1455.0,915.3 L1457.0,913.7 L1459.0,912.1 L1461.0,910.7 L1463.0,909.3 L1465.0,908.1 L1467.0,906.9 L1469.0,905.9 L1471.0,905.1 L1473.0,904.4 L1475.0,903.8 L1477.0,903.4 L1479.0,903.1 L1481.0,903.1 L1483.0,903.2 L1485.0,903.5 L1487.0,903.8 L1489.0,904.4 L1491.0,905.0 L1493.0,905.6 L1495.0,906.4 L1497.0,907.2 L1499.0,908.0 L1501.0,908.9 L1503.0,909.7 L1505.0,910.5 L1507.0,911.3 L1509.0,912.0 L1511.0,912.7 L1513.0,913.4 L1515.0,913.9 L1517.0,914.5 L1519.0,914.9 L1521.0,915.3 L1523.0,915.7 L1525.0,915.9 L1527.0,916.1 L1529.0,916.2 L1531.0,916.3 L1533.0,916.3 L1535.0,916.2 L1537.0,916.0 L1539.0,915.7 L1541.0,915.3 L1543.0,914.9 L1545.0,914.3 L1547.0,913.7 L1549.0,913.0 L1551.0,912.1 L1553.0,911.2 L1555.0,910.1 L1557.0,909.0 L1559.0,907.9 L1561.0,906.8 L1563.0,905.8 L1565.0,904.9 L1567.0,904.2 L1569.0,903.7 L1571.0,903.5 L1573.0,903.7 L1575.0,903.9 L1577.0,901.4 L1579.0,899.2 L1581.0,897.3 L1583.0,895.8 L1585.0,894.4 L1587.0,893.4 L1589.0,892.6 L1591.0,892.0 L1593.0,891.7 L1595.0,891.6 L1597.0,891.7 L1599.0,892.0 L1601.0,892.5 L1603.0,893.3 L1605.0,894.2 L1607.0,895.2 L1609.0,896.5 L1611.0,897.8 L1613.0,899.4 L1615.0,901.1 L1617.0,902.9 L1619.0,904.8 L1621.0,906.9 L1623.0,909.1 L1625.0,911.3 L1627.0,913.7 L1629.0,916.1 L1631.0,918.6 L1633.0,921.2 L1635.0,923.9 L1637.0,926.5 L1639.0,928.1 L1641.0,930.6 L1643.0,933.1 L1645.0,935.5 L1647.0,938.0 L1649.0,940.4 L1651.0,942.8 L1653.0,945.1 L1655.0,947.4 L1657.0,949.7 L1659.0,951.9 L1661.0,954.0 L1663.0,956.0 L1665.0,958.0 L1667.0,959.9 L1669.0,961.8 L1671.0,963.5 L1673.0,965.1 L1675.0,966.7 L1677.0,968.1 L1679.0,969.4 L1681.0,970.6 L1683.0,971.6 L1685.0,972.5 L1687.0,973.3 L1689.0,973.9 L1691.0,974.4 L1693.0,974.8 L1695.0,974.9 L1697.0,974.9 L1699.0,974.7 L1701.0,974.4 L1703.0,973.8 L1705.0,973.1 L1707.0,972.2 L1709.0,971.2 L1711.0,970.0 L1713.0,968.7 L1715.0,967.3 L1717.0,965.8 L1719.0,964.2 L1721.0,962.5 L1723.0,960.8 L1725.0,958.9 L1727.0,957.1 L1729.0,955.2 L1731.0,953.3 L1733.0,951.3 L1735.0,949.4 L1737.0,947.5 L1739.0,945.6 L1741.0,943.8 L1743.0,942.0 L1745.0,940.2 L1747.0,938.5 L1749.0,937.0 L1751.0,935.5 L1753.0,934.1 L1755.0,932.8 L1757.0,931.7 L1759.0,930.7 L1761.0,929.9 L1763.0,929.2 L1765.0,928.7 L1767.0,928.2 L1769.0,928.0 L1771.0,927.8 L1773.0,927.7 L1775.0,927.7 L1777.0,927.7 L1779.0,927.9 L1781.0,928.1 L1783.0,928.3 L1785.0,928.6 L1787.0,928.8 L1789.0,929.1 L1791.0,929.4 L1793.0,929.7 L1795.0,929.9 L1797.0,930.2 L1799.0,930.3 L1801.0,930.4 L1803.0,930.5 L1805.0,930.4 L1807.0,930.3 L1809.0,930.1 L1811.0,929.8 L1813.0,929.3 L1815.0,928.7 L1817.0,928.1 L1819.0,927.3 L1821.0,926.5 L1823.0,925.5 L1825.0,924.5 L1827.0,923.4 L1829.0,922.2 L1831.0,920.9 L1833.0,919.6 L1835.0,918.2 L1837.0,916.7 L1839.0,915.3 L1841.0,913.7 L1843.0,912.1 L1845.0,910.5 L1847.0,908.8 L1849.0,907.2 L1851.0,905.5 L1853.0,903.7 L1855.0,902.0 L1855.4,901.6 L1855.4,1039 L525.0,1039 Z" fill="#5f4fbe"/><path d="M525.0,1039.0 L527.0,1031.3 L529.0,1023.8 L531.0,1016.3 L533.0,1008.9 L535.0,1001.7 L537.0,994.6 L539.0,987.7 L541.0,980.9 L543.0,974.4 L545.0,968.1 L547.0,962.1 L549.0,956.3 L551.0,950.9 L553.0,945.7 L555.0,941.0 L557.0,936.6 L559.0,932.7 L561.0,929.2 L563.0,926.3 L565.0,923.8 L567.0,921.8 L569.0,920.2 L571.0,919.1 L573.0,918.4 L575.0,918.0 L577.0,918.0 L579.0,918.3 L581.0,918.9 L583.0,919.8 L585.0,920.9 L587.0,922.3 L589.0,923.8 L591.0,925.5 L593.0,927.4 L595.0,929.4 L597.0,931.5 L599.0,933.7 L601.0,935.9 L603.0,938.1 L605.0,940.4 L607.0,942.6 L609.0,944.8 L611.0,947.0 L613.0,949.2 L615.0,951.4 L617.0,953.5 L619.0,955.6 L621.0,957.6 L623.0,959.6 L625.0,961.4 L627.0,963.3 L629.0,965.0 L631.0,966.6 L633.0,968.1 L635.0,969.5 L637.0,970.8 L639.0,972.0 L641.0,973.0 L643.0,973.9 L645.0,974.7 L647.0,975.3 L649.0,975.7 L651.0,976.0 L653.0,976.0 L655.0,975.9 L657.0,975.6 L659.0,975.1 L661.0,974.4 L663.0,973.4 L665.0,972.2 L667.0,970.7 L669.0,968.9 L671.0,966.9 L673.0,964.5 L675.0,961.9 L677.0,959.2 L679.0,956.2 L681.0,953.3 L683.0,950.3 L685.0,947.3 L687.0,944.5 L689.0,941.9 L691.0,939.5 L693.0,937.3 L695.0,935.4 L697.0,933.8 L699.0,932.3 L701.0,931.1 L703.0,930.1 L705.0,929.4 L707.0,928.8 L709.0,928.5 L711.0,928.3 L713.0,928.4 L715.0,928.6 L717.0,929.0 L719.0,929.7 L721.0,930.4 L723.0,931.4 L725.0,932.5 L727.0,933.7 L729.0,935.1 L731.0,936.7 L733.0,938.3 L735.0,940.1 L737.0,942.0 L739.0,944.0 L741.0,946.1 L743.0,948.3 L745.0,950.6 L747.0,952.9 L749.0,955.3 L751.0,957.8 L753.0,960.4 L755.0,963.0 L757.0,965.6 L759.0,968.3 L761.0,971.1 L763.0,973.9 L765.0,976.7 L767.0,979.6 L769.0,982.5 L771.0,985.5 L773.0,988.4 L775.0,991.4 L777.0,994.4 L779.0,997.4 L781.0,1000.2 L783.0,1002.8 L785.0,1005.3 L787.0,1007.4 L789.0,1009.2 L791.0,1010.6 L793.0,1011.6 L795.0,1012.1 L797.0,1012.1 L799.0,1011.7 L801.0,1010.8 L803.0,1009.6 L805.0,1008.0 L807.0,1006.1 L809.0,1003.9 L811.0,1001.3 L813.0,998.6 L815.0,995.6 L817.0,992.4 L819.0,989.1 L821.0,985.6 L823.0,982.0 L825.0,978.3 L827.0,974.6 L829.0,970.8 L831.0,967.1 L833.0,963.3 L835.0,959.5 L837.0,955.8 L839.0,952.0 L841.0,948.3 L843.0,944.7 L845.0,941.1 L847.0,937.5 L849.0,934.0 L851.0,930.6 L853.0,927.3 L855.0,924.0 L857.0,920.9 L859.0,917.8 L861.0,914.9 L863.0,912.1 L865.0,909.4 L867.0,906.8 L869.0,904.4 L871.0,902.0 L873.0,899.8 L875.0,897.6 L877.0,895.6 L879.0,893.6 L881.0,891.8 L883.0,890.0 L885.0,888.4 L887.0,886.8 L889.0,885.4 L891.0,884.0 L893.0,882.7 L895.0,881.4 L897.0,880.3 L899.0,879.2 L901.0,878.3 L903.0,877.3 L905.0,876.5 L907.0,875.7 L909.0,875.0 L911.0,874.4 L913.0,873.8 L915.0,873.3 L917.0,872.9 L919.0,872.5 L921.0,872.2 L923.0,871.9 L925.0,871.7 L927.0,871.5 L929.0,871.4 L931.0,871.3 L933.0,871.3 L935.0,871.4 L937.0,871.5 L939.0,871.7 L941.0,871.9 L943.0,872.3 L945.0,872.6 L947.0,873.1 L949.0,873.7 L951.0,874.3 L953.0,875.0 L955.0,875.9 L957.0,876.8 L959.0,877.8 L961.0,878.9 L963.0,880.1 L965.0,881.4 L967.0,882.8 L969.0,884.3 L971.0,886.0 L973.0,887.7 L975.0,889.6 L977.0,891.5 L979.0,893.5 L981.0,895.7 L983.0,897.9 L985.0,900.2 L987.0,902.6 L989.0,905.0 L991.0,907.6 L993.0,910.2 L995.0,912.9 L997.0,915.7 L999.0,918.5 L1001.0,921.4 L1003.0,924.4 L1005.0,927.4 L1007.0,930.5 L1009.0,933.6 L1011.0,936.8 L1013.0,940.0 L1015.0,943.3 L1017.0,946.6 L1019.0,949.9 L1021.0,953.2 L1023.0,956.6 L1025.0,960.0 L1027.0,963.4 L1029.0,966.8 L1031.0,970.2 L1033.0,973.5 L1035.0,976.9 L1037.0,980.2 L1039.0,983.3 L1041.0,986.4 L1043.0,989.2 L1045.0,991.8 L1047.0,994.1 L1049.0,996.2 L1051.0,997.9 L1053.0,999.4 L1055.0,1000.5 L1057.0,1001.4 L1059.0,1001.9 L1061.0,1002.2 L1063.0,1002.2 L1065.0,1002.0 L1067.0,1001.5 L1069.0,1000.7 L1071.0,999.8 L1073.0,998.6 L1075.0,997.2 L1077.0,995.7 L1079.0,994.0 L1081.0,992.1 L1083.0,990.1 L1085.0,988.0 L1087.0,985.7 L1089.0,983.4 L1091.0,981.0 L1093.0,978.5 L1095.0,975.9 L1097.0,973.3 L1099.0,970.7 L1101.0,968.0 L1103.0,965.4 L1105.0,962.7 L1107.0,960.1 L1109.0,957.5 L1111.0,955.0 L1113.0,952.5 L1115.0,950.2 L1117.0,947.9 L1119.0,945.7 L1121.0,943.7 L1123.0,941.8 L1125.0,940.0 L1127.0,938.4 L1129.0,936.9 L1131.0,935.6 L1133.0,934.5 L1135.0,933.5 L1137.0,932.6 L1139.0,931.8 L1141.0,931.2 L1143.0,930.6 L1145.0,930.2 L1147.0,929.9 L1149.0,929.7 L1151.0,929.7 L1153.0,929.7 L1155.0,929.8 L1157.0,930.0 L1159.0,930.3 L1161.0,930.7 L1163.0,931.1 L1165.0,931.7 L1167.0,932.4 L1169.0,933.1 L1171.0,933.9 L1173.0,934.8 L1175.0,935.8 L1177.0,936.9 L1179.0,938.0 L1181.0,939.2 L1183.0,940.5 L1185.0,941.9 L1187.0,943.3 L1189.0,944.8 L1191.0,946.4 L1193.0,948.1 L1195.0,949.8 L1197.0,951.5 L1199.0,953.4 L1201.0,955.3 L1203.0,957.2 L1205.0,959.3 L1207.0,961.3 L1209.0,963.4 L1211.0,965.5 L1213.0,967.5 L1215.0,969.5 L1217.0,971.5 L1219.0,973.4 L1221.0,975.1 L1223.0,976.8 L1225.0,978.2 L1227.0,979.6 L1229.0,980.7 L1231.0,981.7 L1233.0,982.5 L1235.0,983.1 L1237.0,983.5 L1239.0,983.7 L1241.0,983.7 L1243.0,983.6 L1245.0,983.2 L1247.0,982.6 L1249.0,981.9 L1251.0,980.9 L1253.0,979.7 L1255.0,978.2 L1257.0,976.6 L1259.0,974.8 L1261.0,972.7 L1263.0,970.5 L1265.0,968.1 L1267.0,965.6 L1269.0,963.1 L1271.0,960.5 L1273.0,957.9 L1275.0,955.3 L1277.0,952.9 L1279.0,950.5 L1281.0,948.2 L1283.0,946.1 L1285.0,944.2 L1287.0,942.4 L1289.0,940.7 L1291.0,939.3 L1293.0,938.0 L1295.0,936.8 L1297.0,935.8 L1299.0,935.1 L1301.0,934.4 L1303.0,934.0 L1305.0,933.7 L1307.0,933.7 L1309.0,933.8 L1311.0,934.1 L1313.0,934.5 L1315.0,935.1 L1317.0,935.8 L1319.0,936.7 L1321.0,937.7 L1323.0,938.8 L1325.0,940.1 L1327.0,941.5 L1329.0,943.0 L1331.0,944.5 L1333.0,946.2 L1335.0,948.0 L1337.0,949.9 L1339.0,951.8 L1341.0,953.8 L1343.0,955.9 L1345.0,958.0 L1347.0,960.2 L1349.0,962.4 L1351.0,964.7 L1353.0,966.9 L1355.0,969.2 L1357.0,971.4 L1359.0,973.6 L1361.0,975.8 L1363.0,977.9 L1365.0,979.9 L1367.0,981.7 L1369.0,983.5 L1371.0,985.2 L1373.0,986.6 L1375.0,988.0 L1377.0,989.1 L1379.0,990.0 L1381.0,990.7 L1383.0,991.2 L1385.0,991.5 L1387.0,991.4 L1389.0,991.2 L1391.0,990.7 L1393.0,990.0 L1395.0,989.1 L1397.0,988.1 L1399.0,987.0 L1401.0,985.7 L1403.0,984.4 L1405.0,982.9 L1407.0,981.5 L1409.0,980.0 L1411.0,978.5 L1413.0,977.0 L1415.0,975.5 L1417.0,973.9 L1419.0,972.4 L1421.0,970.9 L1423.0,969.3 L1425.0,967.8 L1427.0,966.3 L1429.0,964.8 L1431.0,963.3 L1433.0,961.8 L1435.0,960.4 L1437.0,959.0 L1439.0,957.6 L1441.0,956.2 L1443.0,954.9 L1445.0,953.6 L1447.0,952.3 L1449.0,951.1 L1451.0,950.0 L1453.0,948.9 L1455.0,947.8 L1457.0,946.8 L1459.0,945.9 L1461.0,945.0 L1463.0,944.2 L1465.0,943.5 L1467.0,942.9 L1469.0,942.4 L1471.0,942.0 L1473.0,941.8 L1475.0,941.6 L1477.0,941.5 L1479.0,941.6 L1481.0,941.9 L1483.0,942.2 L1485.0,942.7 L1487.0,943.4 L1489.0,944.2 L1491.0,945.2 L1493.0,946.4 L1495.0,947.7 L1497.0,949.2 L1499.0,950.9 L1501.0,952.8 L1503.0,954.9 L1505.0,957.0 L1507.0,959.3 L1509.0,961.6 L1511.0,964.0 L1513.0,966.5 L1515.0,968.9 L1517.0,971.4 L1519.0,973.7 L1521.0,975.9 L1523.0,977.9 L1525.0,979.6 L1527.0,980.9 L1529.0,981.8 L1531.0,982.1 L1533.0,982.0 L1535.0,981.2 L1537.0,979.9 L1539.0,978.0 L1541.0,975.5 L1543.0,972.5 L1545.0,968.9 L1547.0,964.8 L1549.0,960.3 L1551.0,955.5 L1553.0,950.3 L1555.0,945.1 L1557.0,939.7 L1559.0,934.5 L1561.0,929.4 L1563.0,924.6 L1565.0,920.1 L1567.0,916.0 L1569.0,912.2 L1571.0,908.8 L1573.0,905.7 L1575.0,902.9 L1577.0,900.4 L1579.0,898.2 L1581.0,896.3 L1583.0,894.8 L1585.0,893.4 L1587.0,892.4 L1589.0,891.6 L1591.0,891.0 L1593.0,890.7 L1595.0,890.6 L1597.0,890.7 L1599.0,891.0 L1601.0,891.5 L1603.0,892.3 L1605.0,893.2 L1607.0,894.2 L1609.0,895.5 L1611.0,896.8 L1613.0,898.4 L1615.0,900.1 L1617.0,901.9 L1619.0,903.8 L1621.0,905.9 L1623.0,908.1 L1625.0,910.3 L1627.0,912.7 L1629.0,915.1 L1631.0,917.6 L1633.0,920.2 L1635.0,922.9 L1637.0,925.5 L1639.0,928.3 L1641.0,931.0 L1643.0,933.8 L1645.0,936.7 L1647.0,939.5 L1649.0,942.4 L1651.0,945.2 L1653.0,948.1 L1655.0,950.9 L1657.0,953.7 L1659.0,956.5 L1661.0,959.3 L1663.0,962.0 L1665.0,964.7 L1667.0,967.3 L1669.0,969.9 L1671.0,972.4 L1673.0,974.8 L1675.0,977.2 L1677.0,979.4 L1679.0,981.6 L1681.0,983.7 L1683.0,985.6 L1685.0,987.5 L1687.0,989.2 L1689.0,990.8 L1691.0,992.3 L1693.0,993.6 L1695.0,994.7 L1697.0,995.7 L1699.0,996.6 L1701.0,997.2 L1703.0,997.7 L1705.0,998.0 L1707.0,998.1 L1709.0,998.0 L1711.0,997.7 L1713.0,997.2 L1715.0,996.4 L1717.0,995.5 L1719.0,994.2 L1721.0,992.8 L1723.0,991.1 L1725.0,989.1 L1727.0,986.9 L1729.0,984.4 L1731.0,981.8 L1733.0,979.1 L1735.0,976.3 L1737.0,973.4 L1739.0,970.6 L1741.0,967.9 L1743.0,965.3 L1745.0,962.8 L1747.0,960.6 L1749.0,958.6 L1751.0,956.8 L1753.0,955.3 L1755.0,954.1 L1757.0,953.0 L1759.0,952.2 L1761.0,951.6 L1763.0,951.2 L1765.0,951.0 L1767.0,951.0 L1769.0,951.2 L1771.0,951.6 L1773.0,952.1 L1775.0,952.8 L1777.0,953.6 L1779.0,954.6 L1781.0,955.7 L1783.0,957.0 L1785.0,958.3 L1787.0,959.7 L1789.0,961.3 L1791.0,962.8 L1793.0,964.4 L1795.0,965.9 L1797.0,967.3 L1799.0,968.7 L1801.0,969.9 L1803.0,971.0 L1805.0,971.8 L1807.0,972.4 L1809.0,972.8 L1811.0,972.8 L1813.0,972.5 L1815.0,972.0 L1817.0,971.1 L1819.0,970.0 L1821.0,968.6 L1823.0,967.1 L1825.0,965.3 L1827.0,963.3 L1829.0,961.1 L1831.0,958.8 L1833.0,956.4 L1835.0,953.8 L1837.0,951.1 L1839.0,948.4 L1841.0,945.5 L1843.0,942.7 L1845.0,939.7 L1847.0,936.8 L1849.0,933.9 L1851.0,930.9 L1853.0,928.1 L1855.0,925.2 L1855.4,924.7 L1855.4,1039 L525.0,1039 Z" fill="#cf3664"/><rect x="511" y="1038.6" width="1345" height="2.4" fill="#9aa2a2"/></svg>
<div class="t ax" style="left:494.6px;top:1058.8px;width:40px;text-align:center;font-size:15.5px">1</div>
<div class="t ax" style="left:531.7px;top:1058.8px;width:40px;text-align:center;font-size:15.5px">2</div>
<div class="t ax" style="left:570.1px;top:1058.8px;width:40px;text-align:center;font-size:15.5px">3</div>
<div class="t ax" style="left:608.5px;top:1058.8px;width:40px;text-align:center;font-size:15.5px">4</div>
<div class="t ax" style="left:647.6px;top:1058.8px;width:40px;text-align:center;font-size:15.5px">5</div>
<div class="t ax" style="left:686.4px;top:1058.8px;width:40px;text-align:center;font-size:15.5px">6</div>
<div class="t ax" style="left:724.1px;top:1058.8px;width:40px;text-align:center;font-size:15.5px">7</div>
<div class="t ax" style="left:762.9px;top:1058.8px;width:40px;text-align:center;font-size:15.5px">8</div>
<div class="t ax" style="left:801.3px;top:1058.8px;width:40px;text-align:center;font-size:15.5px">9</div>
<div class="t ax" style="left:843.8px;top:1058.8px;width:40px;text-align:center;font-size:15.5px">10</div>
<div class="t ax" style="left:888.0px;top:1058.8px;width:40px;text-align:center;font-size:15.5px">11</div>
<div class="t ax" style="left:932.9px;top:1058.8px;width:40px;text-align:center;font-size:15.5px">12</div>
<div class="t ax" style="left:978.5px;top:1058.8px;width:40px;text-align:center;font-size:15.5px">13</div>
<div class="t ax" style="left:1024.0px;top:1058.8px;width:40px;text-align:center;font-size:15.5px">14</div>
<div class="t ax" style="left:1069.9px;top:1058.8px;width:40px;text-align:center;font-size:15.5px">15</div>
<div class="t ax" style="left:1115.8px;top:1058.8px;width:40px;text-align:center;font-size:15.5px">16</div>
<div class="t ax" style="left:1161.3px;top:1058.8px;width:40px;text-align:center;font-size:15.5px">17</div>
<div class="t ax" style="left:1206.4px;top:1058.8px;width:40px;text-align:center;font-size:15.5px">18</div>
<div class="t ax" style="left:1251.8px;top:1058.8px;width:40px;text-align:center;font-size:15.5px">19</div>
<div class="t ax" style="left:1299.0px;top:1058.8px;width:40px;text-align:center;font-size:15.5px">20</div>
<div class="t ax" style="left:1345.9px;top:1058.8px;width:40px;text-align:center;font-size:15.5px">21</div>
<div class="t ax" style="left:1392.8px;top:1058.8px;width:40px;text-align:center;font-size:15.5px">22</div>
<div class="t ax" style="left:1441.0px;top:1058.8px;width:40px;text-align:center;font-size:15.5px">23</div>
<div class="t ax" style="left:1489.7px;top:1058.8px;width:40px;text-align:center;font-size:15.5px">24</div>
<div class="t ax" style="left:1537.6px;top:1058.8px;width:40px;text-align:center;font-size:15.5px">25</div>
<div class="t ax" style="left:1586.6px;top:1058.8px;width:40px;text-align:center;font-size:15.5px">26</div>
<div class="t ax" style="left:1634.1px;top:1058.8px;width:40px;text-align:center;font-size:15.5px">27</div>
<div class="t ax" style="left:1682.1px;top:1058.8px;width:40px;text-align:center;font-size:15.5px">28</div>
<div class="t ax" style="left:1730.3px;top:1058.8px;width:40px;text-align:center;font-size:15.5px">29</div>
<div class="t ax" style="left:1779.0px;top:1058.8px;width:40px;text-align:center;font-size:15.5px">30</div>
<div class="t ax" style="left:1826.9px;top:1058.8px;width:40px;text-align:center;font-size:15.5px">31</div>
<div class="t" style="left:501.5px;top:1079.8px;font-size:15.5px;color:#465253;font-weight:400;letter-spacing:0.2px;-webkit-text-stroke:0.25px #465253">Dec</div>
<div style="position:absolute;left:905px;top:1119.5px;width:17px;height:17px;background:#0ec1b1;border-radius:4px"></div>
<div class="t" style="left:933.0px;top:1118.7px;font-size:18px;color:#4c5859;font-weight:400;letter-spacing:1.0px;">Twitter</div>
<div style="position:absolute;left:1026px;top:1119.5px;width:17px;height:17px;background:#5f4fbe;border-radius:4px"></div>
<div class="t" style="left:1054.0px;top:1118.7px;font-size:18px;color:#4c5859;font-weight:400;letter-spacing:0.35px;">Facebook</div>
<div style="position:absolute;left:1170px;top:1119.5px;width:17px;height:17px;background:#cf3664;border-radius:4px"></div>
<div class="t" style="left:1198.0px;top:1118.7px;font-size:18px;color:#4c5859;font-weight:400;letter-spacing:0.35px;">Instagram</div>
<div style="position:absolute;left:1318px;top:1119.5px;width:17px;height:17px;background:#fdc91f;border-radius:4px"></div>
<div class="t" style="left:1346.0px;top:1118.7px;font-size:18px;color:#4c5859;font-weight:400;letter-spacing:0.35px;">LinkedIn</div>
<div style="position:absolute;left:467px;top:1183px;width:1389px;height:60px;background:#fff;border:1px solid #dee1e1;border-radius:8px;box-sizing:border-box"></div>
<div class="t" style="left:491.0px;top:1211.4px;font-size:16px;color:#515e5f;font-weight:400;letter-spacing:0.3px;">Audience Metrics</div>
<div class="t" style="left:1557.0px;top:1211.4px;font-size:16px;color:#515e5f;font-weight:400;letter-spacing:0.3px;">Totals</div>
<div class="t" style="left:1761.0px;top:1211.4px;font-size:16px;color:#515e5f;font-weight:400;letter-spacing:0.3px;">% Change</div>
<div style="position:absolute;left:1922px;top:11px;width:66px;height:66px;background:#2079c3;border-radius:50%"></div>
<svg style="position:absolute;left:1943px;top:32px" width="25" height="25" viewBox="0 0 25 25">
<path d="M10.5,3.8 H5 C3,3.8 2,4.8 2,6.8 V20 C2,22 3,23 5,23 H17.5 C19.5,23 20.5,22 20.5,20 V14" fill="none" stroke="#fff" stroke-width="3" stroke-linecap="round"/>
<path d="M8,17.5 L9,13.5 L20,2.5 C21,1.5 22,1.5 23,2.5 C24,3.5 24,4.5 23,5.5 L12,16.5 Z" fill="#fff"/></svg>
<svg style="position:absolute;left:1945px;top:110px" width="21" height="24" viewBox="0 0 21 24">
<path d="M10.5,1 C11.3,1 12,1.7 12,2.5 V3 C15.5,3.8 17.5,6.8 17.5,10.5 V15 L20.5,19 V20 H0.5 V19 L3.5,15 V10.5 C3.5,6.8 5.5,3.8 9,3 V2.5 C9,1.7 9.7,1 10.5,1 Z" fill="#364141"/>
<path d="M8,21.5 H13 C13,23 12,23.8 10.5,23.8 C9,23.8 8,23 8,21.5 Z" fill="#364141"/></svg>
<div style="position:absolute;left:1962.5px;top:104px;width:11px;height:11px;background:#2079c3;border-radius:50%;box-shadow:0 0 0 2px #fff"></div>
<svg style="position:absolute;left:1944px;top:176px" width="24" height="25" viewBox="0 0 24 25">
<path d="M0.2,24.8 V8.2 C0.2,3.6 3.7,0.1 8.3,0.1 H20.8 C22,0.1 22.8,0.9 22.8,2.1 V11.8 C22.8,16.2 19.3,19.7 14.9,19.7 H7.5 L0.2,24.8 Z" fill="#364141"/>
<path d="M13.8,4.6 L5.8,11.4 H10.6 L8.6,15.2 L17.6,8.2 H12.4 Z" fill="#fff"/></svg>
<div style="position:absolute;left:1962.5px;top:171px;width:11px;height:11px;background:#2079c3;border-radius:50%;box-shadow:0 0 0 2px #fff"></div>
<svg style="position:absolute;left:1944px;top:244px" width="23" height="23" viewBox="0 0 23 23">
<circle cx="11.5" cy="11.5" r="11.2" fill="#364141"/>
<path d="M7.6,8.6 C7.6,6.2 9.4,4.7 11.7,4.7 C14,4.7 15.7,6.2 15.7,8.4 C15.7,10.6 13.2,11.2 12.9,12.8 V13.6 H10.3 V12.6 C10.3,10.2 13,9.7 13,8.5 C13,7.7 12.4,7.2 11.6,7.2 C10.7,7.2 10.2,7.8 10.2,8.6 Z" fill="#fff"/>
<circle cx="11.6" cy="16.8" r="1.7" fill="#fff"/></svg>
<div style="position:absolute;left:1999px;top:0px;width:1px;height:1218px;background:#e3e5e5"></div>
<div style="position:absolute;left:411px;top:1216.5px;width:1589px;height:1.5px;background:#e1e4e4"></div>
</div></body></html>
